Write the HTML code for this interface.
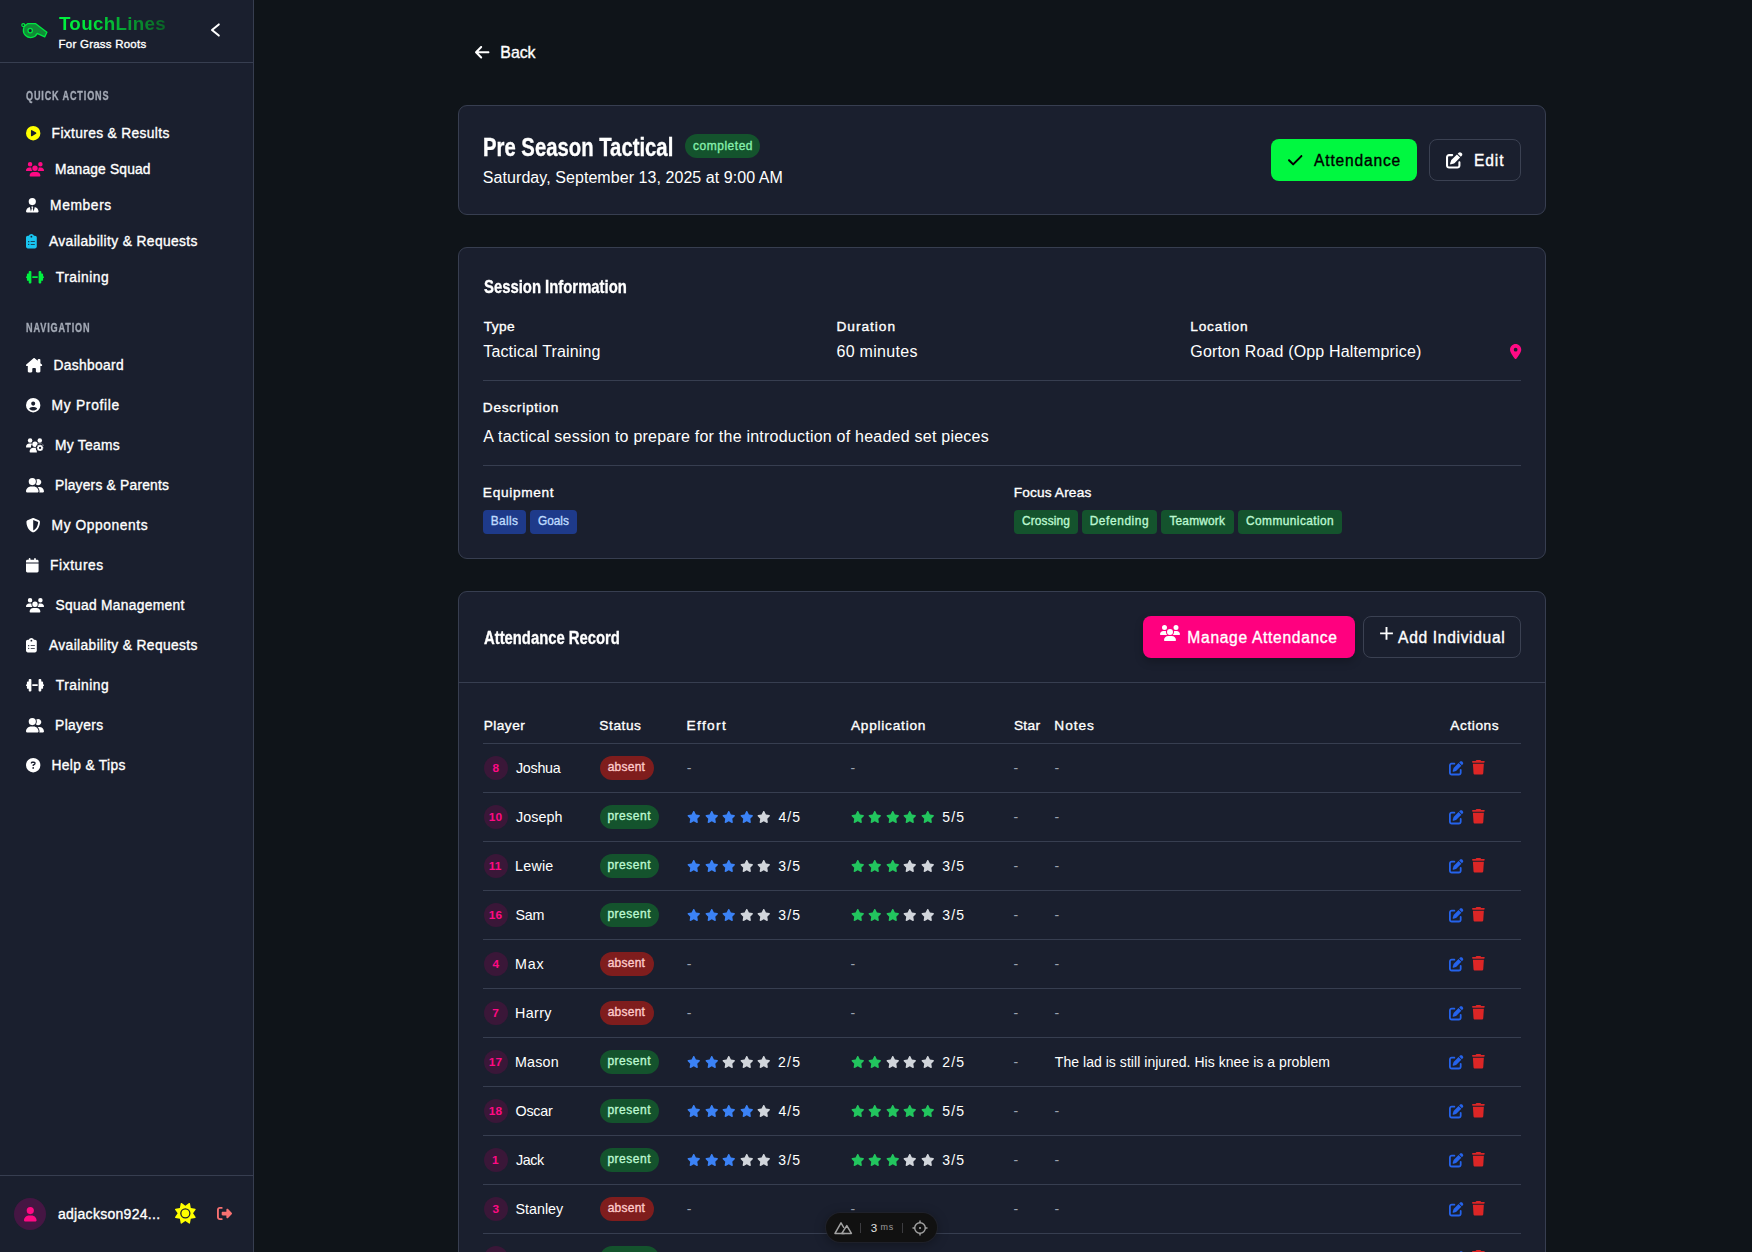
<!DOCTYPE html>
<html lang="en"><head><meta charset="utf-8"><title>TouchLines - Pre Season Tactical</title>
<style>
*{box-sizing:border-box;margin:0;padding:0}
html,body{width:1752px;height:1252px;overflow:hidden;background:#0f1419;color:#fff;font-family:"Liberation Sans",sans-serif;font-size:16px}
svg.i{position:absolute;display:block;overflow:visible}
.t{position:absolute;white-space:nowrap;font-weight:normal;display:block;text-decoration:none}
.hd{-webkit-text-stroke:.35px currentColor}
a{color:inherit;text-decoration:none}
.sb{position:absolute;left:0;top:0;width:254px;height:1252px;background:#1a1f2e;border-right:1px solid #373e50}
.sbh{position:absolute;left:0;top:0;width:253px;height:63px;border-bottom:1px solid #373e50}
.grad{background:linear-gradient(90deg,#00f23f 0%,#00e23a 30%,#07a032 62%,#0a5f25 100%);-webkit-background-clip:text;background-clip:text;color:transparent;padding-right:2px}
.sbf{position:absolute;left:0;top:1175px;width:253px;height:77px;border-top:1px solid #373e50}
.sbf>*{margin-top:-1176px}
.av{position:absolute;left:14px;top:1198px;width:32px;height:32px;border-radius:50%;background:#451643}
.main{position:absolute;left:254px;top:0;width:1498px;height:1252px;overflow:hidden}
.card{position:absolute;left:204px;width:1088px;background:#1a1f2e;border:1px solid #373e50;border-radius:9px}
.c1{top:105px;height:110px}
.c2{top:247px;height:312px}
.c3{top:591px;height:700px}
.c3h{position:absolute;left:0;top:0;width:1086px;height:91px;border-bottom:1px solid #373e50}
.pill{position:absolute;height:24px;border-radius:12px}
.done{background:#14532d}
.btn{position:absolute;height:42px;border-radius:8px}
.att{background:#00f840}
.ol{border:1px solid #3b4152}
.man{background:#ff007f;box-shadow:0 4px 8px rgba(0,0,0,.22)}
.hr{position:absolute;left:24px;width:1038px;height:1px;background:#373e50}
.tag{position:absolute;height:24px;border-radius:4px}
.bl{background:#1e3a8a}
.gr{background:#14532d}
.row{position:absolute;left:24px;width:1038px;height:49px;border-bottom:1px solid #373e50}
.num{position:absolute;width:24px;height:24px;border-radius:50%;background:#3a1738}
.st{position:absolute;height:24px;border-radius:12px}
.absent{background:#7f1d1d}
.present{background:#14532d}
.dev{position:absolute;left:826px;top:1213px;width:111px;height:29px;border-radius:15px;background:#111;box-shadow:0 0 0 1px rgba(40,40,46,.5),0 2px 12px rgba(0,0,0,.35)}
.sep{position:absolute;top:10px;width:1px;height:10px;background:#3c3c40}
.md{-webkit-text-stroke:.35px currentColor}
</style></head>
<body>
<aside class="sb"><div class="sbh">
<svg class="i" style="left:20.00px;top:20.00px;" width="30" height="20" viewBox="20 20 30 20"><path d="M37.100 33.400A7.200 7.200 0 1 1 27.200 24L27.800 23.700H35.700L46.900 32.300L44.700 36.900Z" fill="#118a37" stroke="#00e640" stroke-width="1.300" stroke-linejoin="round"/><circle cx="23.300" cy="25.100" r="1.500" fill="none" stroke="#00e640" stroke-width="1.200"/><circle cx="30.200" cy="30.600" r="2.200" fill="#1a1f2e" stroke="#00e640" stroke-width="1.300"/></svg>
<span class="t grad" style="top:11.00px;font-size:18.8px;line-height:25px;font-weight:bold;letter-spacing:0.298px;left:58.99px;">TouchLines</span>
<span class="t md" style="top:37.00px;font-size:11.5px;line-height:14px;letter-spacing:0.229px;left:58.61px;">For Grass Roots</span>
<svg class="i" style="left:206.00px;top:20.00px;" width="18" height="20" viewBox="206 20 18 20"><path d="M218.800 24.400L212 30L218.800 35.600" fill="none" stroke="#fff" stroke-width="2" stroke-linecap="round" stroke-linejoin="round"/></svg>
</div>
<span class="t hd" style="top:87.00px;font-size:12.9px;line-height:17px;font-weight:bold;color:#a3a9b5;left:26.28px;transform:scaleX(0.7051);transform-origin:0 50%;letter-spacing:1.2px;">QUICK ACTIONS</span>
<nav>
<a class="ni"><svg class="i" style="left:25.80px;top:125.60px;" width="14.40" height="14.4" viewBox="0 0 512 512" fill="#ffff00"><path d="M0 256a256 256 0 1 1 512 0A256 256 0 1 1 0 256zM188.300 147.100c-7.600 4.200-12.300 12.300-12.300 20.900V344c0 8.700 4.700 16.700 12.300 20.900s16.800 4.100 24.300-.5l144-88c7.100-4.400 11.500-12.100 11.500-20.500s-4.400-16.100-11.500-20.500l-144-88c-7.400-4.500-16.700-4.700-24.300-.5z"/></svg><span class="t md" style="top:125.00px;font-size:13.8px;line-height:17px;letter-spacing:0.340px;left:51.62px;">Fixtures &amp; Results</span></a>
<a class="ni"><svg class="i" style="left:25.80px;top:161.60px;" width="18.00" height="14.4" viewBox="0 0 640 512" fill="#ff0a84"><path d="M144 0a80 80 0 1 1 0 160A80 80 0 1 1 144 0zM512 0a80 80 0 1 1 0 160A80 80 0 1 1 512 0zM0 298.700C0 239.800 47.800 192 106.700 192h42.700c15.900 0 31 3.500 44.600 9.700c-1.300 7.200-1.900 14.700-1.900 22.300c0 38.200 16.800 72.500 43.300 96c-.2 0-.4 0-.7 0H21.300C9.600 320 0 310.400 0 298.700zM405.300 320c-.2 0-.4 0-.7 0c26.600-23.500 43.300-57.800 43.300-96c0-7.600-.7-15-1.900-22.300c13.600-6.300 28.700-9.700 44.600-9.700h42.700C592.200 192 640 239.800 640 298.700c0 11.800-9.600 21.300-21.300 21.300H405.300zM224 224a96 96 0 1 1 192 0 96 96 0 1 1 -192 0zM128 485.300C128 411.700 187.700 352 261.300 352H378.700C452.300 352 512 411.700 512 485.300c0 14.700-11.900 26.700-26.700 26.700H154.700c-14.700 0-26.700-11.900-26.700-26.700z"/></svg><span class="t md" style="top:161.00px;font-size:13.8px;line-height:17px;letter-spacing:0.175px;left:55.02px;">Manage Squad</span></a>
<a class="ni"><svg class="i" style="left:25.80px;top:197.60px;" width="12.60" height="14.4" viewBox="0 0 448 512" fill="#fff"><path d="M96 128a128 128 0 1 0 256 0A128 128 0 1 0 96 128zm94.500 200.200l18.600 31L175.800 483.100l-36-146.900c-2-8.100-9.800-13.400-17.900-11.300C51.900 342.400 0 405.800 0 481.300c0 17 13.800 30.700 30.700 30.700H162.500c0 0 0 0 .1 0H168 280h5.500c0 0 0 0 .1 0H417.300c17 0 30.700-13.800 30.700-30.700c0-75.500-51.900-138.900-121.900-156.400c-8.100-2-15.900 3.300-17.900 11.300l-36 146.900L238.900 359.200l18.600-31c6.400-10.700-1.300-24.200-13.700-24.200H224 204.300c-12.400 0-20.100 13.600-13.700 24.200z"/></svg><span class="t md" style="top:197.00px;font-size:13.8px;line-height:17px;letter-spacing:0.622px;left:50.02px;">Members</span></a>
<a class="ni"><svg class="i" style="left:25.80px;top:233.60px;" width="10.80" height="14.4" viewBox="0 0 384 512" fill="#19c5f0"><path d="M192 0c-41.800 0-77.400 26.700-90.500 64H64C28.700 64 0 92.700 0 128V448c0 35.300 28.700 64 64 64H320c35.300 0 64-28.700 64-64V128c0-35.300-28.700-64-64-64H282.500C269.400 26.700 233.800 0 192 0zm0 64a32 32 0 1 1 0 64 32 32 0 1 1 0-64zM72 272a24 24 0 1 1 48 0 24 24 0 1 1 -48 0zm104-16H304c8.800 0 16 7.200 16 16s-7.200 16-16 16H176c-8.800 0-16-7.200-16-16s7.200-16 16-16zM72 368a24 24 0 1 1 48 0 24 24 0 1 1 -48 0zm88 0c0-8.800 7.200-16 16-16H304c8.800 0 16 7.200 16 16s-7.200 16-16 16H176c-8.800 0-16-7.200-16-16z"/></svg><span class="t md" style="top:233.00px;font-size:13.8px;line-height:17px;letter-spacing:0.381px;left:48.97px;">Availability &amp; Requests</span></a>
<a class="ni"><svg class="i" style="left:25.80px;top:269.60px;" width="18.00" height="14.4" viewBox="0 0 640 512" fill="#00f040"><path d="M96 64c0-17.700 14.300-32 32-32h32c17.700 0 32 14.300 32 32V224v64V448c0 17.700-14.300 32-32 32H128c-17.700 0-32-14.300-32-32V384H64c-17.700 0-32-14.300-32-32V288c-17.700 0-32-14.300-32-32s14.300-32 32-32V160c0-17.700 14.300-32 32-32H96V64zm448 0v64h32c17.700 0 32 14.300 32 32v64c17.700 0 32 14.300 32 32s-14.300 32-32 32v64c0 17.700-14.300 32-32 32H544v64c0 17.700-14.300 32-32 32H480c-17.700 0-32-14.300-32-32V288 224 64c0-17.700 14.300-32 32-32h32c17.700 0 32 14.300 32 32zM416 224v64H224V224H416z"/></svg><span class="t md" style="top:269.00px;font-size:13.8px;line-height:17px;letter-spacing:0.508px;left:55.84px;">Training</span></a>
</nav>
<span class="t hd" style="top:319.00px;font-size:12.9px;line-height:17px;font-weight:bold;color:#a3a9b5;left:26.24px;transform:scaleX(0.7079);transform-origin:0 50%;letter-spacing:1.2px;">NAVIGATION</span>
<nav>
<a class="ni"><svg class="i" style="left:25.80px;top:357.60px;" width="16.20" height="14.4" viewBox="0 0 576 512" fill="#fff"><path d="M543.800 287.600c17 0 32-14 32-32.100c1-9-3-17-11-24L512 185V64c0-17.700-14.300-32-32-32H448c-17.700 0-32 14.300-32 32v36.700L309.500 7c-6-5-14-7-21-7s-15 1-22 8L10 231.500c-7 7-10 15-10 24c0 18 14 32.100 32 32.100h32v69.700c-.1 .9-.1 1.800-.1 2.800V472c0 22.100 17.900 40 40 40h16c1.200 0 2.400-.1 3.600-.2c1.500 .1 3 .2 4.500 .2H160h24c22.100 0 40-17.900 40-40V448 384c0-17.700 14.300-32 32-32h64c17.700 0 32 14.300 32 32v64 24c0 22.100 17.900 40 40 40h24 32.500c1.400 0 2.800 0 4.200-.1c1.100 .1 2.200 .1 3.300 .1h16c22.100 0 40-17.900 40-40V455.800c.3-2.600 .5-5.400 .5-8.100l-.7-160.200h32z"/></svg><span class="t md" style="top:357.00px;font-size:13.8px;line-height:17px;letter-spacing:0.353px;left:53.42px;">Dashboard</span></a>
<a class="ni"><svg class="i" style="left:25.80px;top:397.60px;" width="14.40" height="14.4" viewBox="0 0 512 512" fill="#fff"><path d="M399 384.200C376.900 345.800 335.400 320 288 320H224c-47.400 0-88.900 25.800-111 64.200c35.200 39.200 86.200 63.800 143 63.800s107.800-24.700 143-63.800zM0 256a256 256 0 1 1 512 0A256 256 0 1 1 0 256zm256 16a72 72 0 1 0 0-144 72 72 0 1 0 0 144z"/></svg><span class="t md" style="top:397.00px;font-size:13.8px;line-height:17px;letter-spacing:0.700px;left:51.62px;">My Profile</span></a>
<a class="ni"><svg class="i" style="left:25.80px;top:437.60px;" width="18" height="14.4" viewBox="0 0 18 14.4"><g fill="#fff"><circle cx="4.100" cy="2.400" r="2.250"/><circle cx="13.800" cy="2.400" r="2.250"/><path d="M0 9c0-2 1.400-3.400 3.300-3.400h1.400c.5 0 1 .1 1.400.3-.9 1-1.300 2.200-1 3.700H.7C.3 9.600 0 9.400 0 9z"/><circle cx="9" cy="6.300" r="2.700"/><path d="M3.600 13.700c0-2.200 1.700-3.900 3.900-3.900h3c.6 0 1.200.1 1.700.4-.9.900-1.400 2-1.400 3.300 0 .3 0 .6.1.9H4.300c-.4 0-.7-.3-.7-.7z"/><path d="M12.100 5.900c.3-.2.800-.3 1.200-.3h1.400c1.900 0 3.300 1.400 3.300 3.400 0 0 0 .1 0 .1-.7-.5-1.600-.8-2.500-.8-1 0-1.900.3-2.600.9.100-.6.100-1.200-.1-1.800-.1-.5-.4-1-.7-1.500z"/><g transform="translate(-0.9,-0.8)"><circle cx="14.95" cy="10.70" r="4.300" fill="#1a1f2e"/><path fill-rule="evenodd" d="M18.17 9.98L18.17 11.42L17.22 11.63L17.21 11.64L17.74 12.47L16.72 13.49L15.89 12.96L15.88 12.97L15.67 13.92L14.23 13.92L14.02 12.97L14.01 12.96L13.18 13.49L12.16 12.47L12.69 11.64L12.68 11.63L11.73 11.42L11.73 9.98L12.68 9.77L12.69 9.76L12.16 8.93L13.18 7.91L14.01 8.44L14.02 8.43L14.23 7.48L15.67 7.48L15.88 8.43L15.89 8.44L16.72 7.91L17.74 8.93L17.21 9.76L17.22 9.77ZM13.80 10.70a1.150 1.150 0 1 0 2.300 0a1.150 1.150 0 1 0 -2.300 0Z"/></g></g></svg><span class="t md" style="top:437.00px;font-size:13.8px;line-height:17px;letter-spacing:0.287px;left:55.02px;">My Teams</span></a>
<a class="ni"><svg class="i" style="left:25.80px;top:477.60px;" width="18.00" height="14.4" viewBox="0 0 640 512" fill="#fff"><path d="M96 128a128 128 0 1 1 256 0A128 128 0 1 1 96 128zM0 482.300C0 383.800 79.800 304 178.300 304h91.400C368.200 304 448 383.800 448 482.300c0 16.400-13.300 29.700-29.700 29.700H29.700C13.300 512 0 498.700 0 482.300zM609.300 512H471.400c5.400-9.400 8.600-20.300 8.600-32v-8c0-60.700-27.100-115.200-69.800-151.800c2.400-.1 4.700-.2 7.100-.2h61.400C567.800 320 640 392.200 640 481.300c0 17-13.800 30.700-30.700 30.700zM432 256c-31 0-59-12.600-79.300-32.900C372.400 196.500 384 163.600 384 128c0-26.800-6.600-52.100-18.300-74.300C384.300 40.100 407.200 32 432 32c61.900 0 112 50.100 112 112s-50.100 112-112 112z"/></svg><span class="t md" style="top:477.00px;font-size:13.8px;line-height:17px;letter-spacing:0.218px;left:55.02px;">Players &amp; Parents</span></a>
<a class="ni"><svg class="i" style="left:25.80px;top:517.60px;" width="14.40" height="14.4" viewBox="0 0 512 512" fill="#fff"><path d="M256 0c4.600 0 9.200 1 13.400 2.900L457.700 82.800c22 9.300 38.400 31 38.300 57.200c-.5 99.200-41.300 280.700-213.600 363.200c-16.700 8-36.100 8-52.800 0C57.300 420.700 16.500 239.200 16 140c-.1-26.200 16.300-47.900 38.300-57.200L242.700 2.900C246.800 1 251.400 0 256 0zm0 66.800V444.800C394 378 431.100 230.100 432 141.400L256 66.800l0 0z"/></svg><span class="t md" style="top:517.00px;font-size:13.8px;line-height:17px;letter-spacing:0.572px;left:51.62px;">My Opponents</span></a>
<a class="ni"><svg class="i" style="left:25.80px;top:557.60px;" width="12.60" height="14.4" viewBox="0 0 448 512" fill="#fff"><path d="M96 32V64H48C21.500 64 0 85.500 0 112v48H448V112c0-26.500-21.500-48-48-48H352V32c0-17.700-14.300-32-32-32s-32 14.300-32 32V64H160V32c0-17.700-14.300-32-32-32S96 14.300 96 32zM448 192H0V464c0 26.500 21.500 48 48 48H400c26.500 0 48-21.500 48-48V192z"/></svg><span class="t md" style="top:557.00px;font-size:13.8px;line-height:17px;letter-spacing:0.593px;left:50.02px;">Fixtures</span></a>
<a class="ni"><svg class="i" style="left:25.80px;top:597.60px;" width="18.00" height="14.4" viewBox="0 0 640 512" fill="#fff"><path d="M144 0a80 80 0 1 1 0 160A80 80 0 1 1 144 0zM512 0a80 80 0 1 1 0 160A80 80 0 1 1 512 0zM0 298.700C0 239.800 47.800 192 106.700 192h42.700c15.900 0 31 3.500 44.600 9.700c-1.300 7.200-1.900 14.700-1.900 22.300c0 38.200 16.800 72.500 43.300 96c-.2 0-.4 0-.7 0H21.300C9.600 320 0 310.400 0 298.700zM405.300 320c-.2 0-.4 0-.7 0c26.600-23.500 43.300-57.800 43.300-96c0-7.600-.7-15-1.900-22.300c13.600-6.300 28.700-9.700 44.600-9.700h42.700C592.200 192 640 239.800 640 298.700c0 11.800-9.600 21.300-21.300 21.300H405.300zM224 224a96 96 0 1 1 192 0 96 96 0 1 1 -192 0zM128 485.300C128 411.700 187.700 352 261.300 352H378.700C452.300 352 512 411.700 512 485.300c0 14.700-11.900 26.700-26.700 26.700H154.700c-14.700 0-26.700-11.900-26.700-26.700z"/></svg><span class="t md" style="top:597.00px;font-size:13.8px;line-height:17px;letter-spacing:0.297px;left:55.52px;">Squad Management</span></a>
<a class="ni"><svg class="i" style="left:25.80px;top:637.60px;" width="10.80" height="14.4" viewBox="0 0 384 512" fill="#fff"><path d="M192 0c-41.800 0-77.400 26.700-90.500 64H64C28.700 64 0 92.700 0 128V448c0 35.300 28.700 64 64 64H320c35.300 0 64-28.700 64-64V128c0-35.300-28.700-64-64-64H282.500C269.400 26.700 233.800 0 192 0zm0 64a32 32 0 1 1 0 64 32 32 0 1 1 0-64zM72 272a24 24 0 1 1 48 0 24 24 0 1 1 -48 0zm104-16H304c8.800 0 16 7.200 16 16s-7.200 16-16 16H176c-8.800 0-16-7.200-16-16s7.200-16 16-16zM72 368a24 24 0 1 1 48 0 24 24 0 1 1 -48 0zm88 0c0-8.800 7.200-16 16-16H304c8.800 0 16 7.200 16 16s-7.200 16-16 16H176c-8.800 0-16-7.200-16-16z"/></svg><span class="t md" style="top:637.00px;font-size:13.8px;line-height:17px;letter-spacing:0.381px;left:48.97px;">Availability &amp; Requests</span></a>
<a class="ni"><svg class="i" style="left:25.80px;top:677.60px;" width="18.00" height="14.4" viewBox="0 0 640 512" fill="#fff"><path d="M96 64c0-17.700 14.300-32 32-32h32c17.700 0 32 14.300 32 32V224v64V448c0 17.700-14.300 32-32 32H128c-17.700 0-32-14.300-32-32V384H64c-17.700 0-32-14.300-32-32V288c-17.700 0-32-14.300-32-32s14.300-32 32-32V160c0-17.700 14.300-32 32-32H96V64zm448 0v64h32c17.700 0 32 14.300 32 32v64c17.700 0 32 14.300 32 32s-14.300 32-32 32v64c0 17.700-14.300 32-32 32H544v64c0 17.700-14.300 32-32 32H480c-17.700 0-32-14.300-32-32V288 224 64c0-17.700 14.300-32 32-32h32c17.700 0 32 14.300 32 32zM416 224v64H224V224H416z"/></svg><span class="t md" style="top:677.00px;font-size:13.8px;line-height:17px;letter-spacing:0.508px;left:55.84px;">Training</span></a>
<a class="ni"><svg class="i" style="left:25.80px;top:717.60px;" width="18.00" height="14.4" viewBox="0 0 640 512" fill="#fff"><path d="M96 128a128 128 0 1 1 256 0A128 128 0 1 1 96 128zM0 482.300C0 383.800 79.800 304 178.300 304h91.400C368.200 304 448 383.800 448 482.300c0 16.400-13.300 29.700-29.700 29.700H29.700C13.300 512 0 498.700 0 482.300zM609.300 512H471.400c5.400-9.400 8.600-20.300 8.600-32v-8c0-60.700-27.100-115.200-69.800-151.800c2.400-.1 4.700-.2 7.100-.2h61.400C567.800 320 640 392.200 640 481.300c0 17-13.800 30.700-30.700 30.700zM432 256c-31 0-59-12.600-79.300-32.900C372.400 196.500 384 163.600 384 128c0-26.800-6.600-52.100-18.300-74.300C384.300 40.100 407.200 32 432 32c61.900 0 112 50.100 112 112s-50.100 112-112 112z"/></svg><span class="t md" style="top:717.00px;font-size:13.8px;line-height:17px;letter-spacing:0.336px;left:55.12px;">Players</span></a>
<a class="ni"><svg class="i" style="left:25.80px;top:757.60px;" width="14.40" height="14.4" viewBox="0 0 512 512" fill="#fff"><path d="M256 512A256 256 0 1 0 256 0a256 256 0 1 0 0 512zM169.800 165.300c7.900-22.300 29.100-37.300 52.800-37.300h58.300c34.900 0 63.100 28.300 63.100 63.100c0 22.600-12.100 43.500-31.700 54.800L280 264.400c-.2 13-10.900 23.600-24 23.600c-13.300 0-24-10.700-24-24V250.500c0-8.600 4.600-16.500 12.100-20.800l44.300-25.400c4.700-2.700 7.600-7.700 7.600-13.100c0-8.400-6.800-15.100-15.100-15.100H222.600c-3.400 0-6.400 2.100-7.500 5.300l-.4 1.200c-4.400 12.500-18.200 19-30.600 14.600s-19-18.200-14.600-30.600l.4-1.200zM224 352a32 32 0 1 1 64 0 32 32 0 1 1 -64 0z"/></svg><span class="t md" style="top:757.00px;font-size:13.8px;line-height:17px;letter-spacing:0.337px;left:51.52px;">Help &amp; Tips</span></a>
</nav>
<div class="sbf"><div class="av"></div>
<svg class="i" style="left:23.80px;top:1206.80px;" width="12.60" height="14.4" viewBox="0 0 448 512" fill="#ff0a84"><path d="M224 256A128 128 0 1 0 224 0a128 128 0 1 0 0 256zm-45.700 48C79.800 304 0 383.800 0 482.300C0 498.700 13.300 512 29.700 512H418.300c16.400 0 29.700-13.300 29.700-29.700C448 383.800 368.200 304 269.700 304H178.300z"/></svg>
<span class="t md" style="top:1205.00px;font-size:14.0px;line-height:18px;letter-spacing:0.292px;left:57.96px;">adjackson924...</span>
<svg class="i" style="left:174.70px;top:1202.95px;" width="20.70" height="20.7" viewBox="0 0 512 512" fill="#ffff00"><path d="M361.500 1.200c5 2.100 8.600 6.600 9.600 11.900L391 121l107.900 19.800c5.300 1 9.800 4.600 11.900 9.600s1.500 10.700-1.600 15.200L446.900 256l62.300 90.300c3.100 4.500 3.700 10.200 1.600 15.200s-6.600 8.600-11.900 9.600L391 391 371.100 498.900c-1 5.300-4.600 9.800-9.600 11.900s-10.700 1.500-15.200-1.600L256 446.900l-90.300 62.300c-4.500 3.100-10.200 3.700-15.200 1.600s-8.600-6.600-9.600-11.900L121 391 13.100 371.100c-5.300-1-9.800-4.600-11.900-9.600s-1.500-10.700 1.600-15.200L65.100 256 2.800 165.700c-3.100-4.500-3.700-10.200-1.600-15.200s6.600-8.600 11.900-9.600L121 121 140.900 13.100c1-5.300 4.600-9.800 9.600-11.900s10.700-1.500 15.200 1.600L256 65.100 346.300 2.800c4.500-3.100 10.200-3.700 15.200-1.600zM160 256a96 96 0 1 1 192 0 96 96 0 1 1 -192 0zm224 0a128 128 0 1 0 -256 0 128 128 0 1 0 256 0z"/></svg>
<svg class="i" style="left:216.70px;top:1206.40px;" width="15.00" height="15" viewBox="0 0 512 512" fill="#f87171"><path d="M377.900 105.900L500.700 228.700c7.200 7.200 11.300 17.100 11.300 27.300s-4.100 20.100-11.300 27.300L377.900 406.100c-6.400 6.400-15 9.900-24 9.900c-18.700 0-33.900-15.200-33.900-33.900l0-62.100-128 0c-17.700 0-32-14.300-32-32l0-64c0-17.700 14.300-32 32-32l128 0 0-62.100c0-18.700 15.200-33.900 33.900-33.900c9 0 17.600 3.600 24 9.900zM160 96L96 96c-17.700 0-32 14.300-32 32l0 256c0 17.700 14.300 32 32 32l64 0c17.700 0 32 14.300 32 32s-14.300 32-32 32l-64 0c-53 0-96-43-96-96L0 128C0 75 43 32 96 32l64 0c17.700 0 32 14.300 32 32s-14.300 32-32 32z"/></svg>
</div></aside>
<main class="main">
<a class="back"><svg class="i" style="left:220.80px;top:43.95px;" width="14.44" height="16.5" viewBox="0 0 448 512" fill="#fff"><path d="M9.400 233.400c-12.500 12.500-12.500 32.800 0 45.300l160 160c12.500 12.500 32.800 12.500 45.300 0s12.500-32.800 0-45.300L109.200 288 416 288c17.700 0 32-14.300 32-32s-14.300-32-32-32l-306.700 0L214.600 118.600c12.500-12.500 12.500-32.800 0-45.300s-32.800-12.500-45.300 0l-160 160z"/></svg><span class="t md" style="top:42.00px;font-size:15.9px;line-height:21px;letter-spacing:-0.049px;left:246.35px;">Back</span></a>
<section class="card c1">
<h1 class="t hd" style="top:25.00px;font-size:26.0px;line-height:32px;font-weight:bold;left:23.99px;transform:scaleX(0.7807);transform-origin:0 50%;">Pre Season Tactical</h1>
<span class="pill done" style="left:226px;top:28px;width:75px"></span><span class="t md" style="top:32.00px;font-size:12px;line-height:16px;color:#86efac;letter-spacing:0.526px;left:233.94px;">completed</span>
<p class="t" style="top:61.00px;font-size:16px;line-height:21px;letter-spacing:0.062px;left:23.87px;">Saturday, September 13, 2025 at 9:00 AM</p>
<div class="btn att" style="left:812px;top:33px;width:146px"></div><svg class="i" style="left:828.80px;top:45.75px;" width="14.44" height="16.5" viewBox="0 0 448 512" fill="#000"><path d="M438.600 105.400c12.500 12.500 12.500 32.800 0 45.300l-256 256c-12.500 12.500-32.800 12.500-45.300 0l-128-128c-12.500-12.500-12.500-32.800 0-45.300s32.800-12.500 45.300 0L160 338.700 393.400 105.400c12.500-12.500 32.800-12.500 45.300 0z"/></svg><span class="t md" style="top:44.00px;font-size:15.6px;line-height:21px;color:#000;letter-spacing:0.802px;left:855.12px;">Attendance</span>
<div class="btn ol" style="left:970px;top:33px;width:92px"></div><svg class="i" style="left:986.90px;top:45.95px;" width="16.50" height="16.5" viewBox="0 0 512 512" fill="#fff"><path d="M471.600 21.700c-21.900-21.900-57.300-21.900-79.200 0L362.300 51.700l97.900 97.900 30.100-30.100c21.900-21.900 21.900-57.300 0-79.200L471.600 21.700zm-299.200 220c-6.100 6.100-10.800 13.600-13.500 21.900l-29.600 88.800c-2.900 8.600-.6 18.100 5.800 24.600s15.900 8.700 24.600 5.800l88.800-29.600c8.200-2.700 15.700-7.400 21.900-13.500L437.700 172.300 339.700 74.300 172.400 241.700zM96 64C43 64 0 107 0 160V416c0 53 43 96 96 96H352c53 0 96-43 96-96V320c0-17.700-14.300-32-32-32s-32 14.300-32 32v96c0 17.700-14.300 32-32 32H96c-17.700 0-32-14.300-32-32V160c0-17.700 14.300-32 32-32h96c17.700 0 32-14.300 32-32s-14.300-32-32-32H96z"/></svg><span class="t md" style="top:44.00px;font-size:15.6px;line-height:21px;letter-spacing:0.873px;left:1014.97px;">Edit</span>
</section>
<section class="card c2">
<h2 class="t hd" style="top:26.00px;font-size:19.0px;line-height:25px;font-weight:bold;left:24.82px;transform:scaleX(0.7821);transform-origin:0 50%;">Session Information</h2>
<span class="t md" style="top:70.00px;font-size:13.7px;line-height:17px;letter-spacing:0.410px;left:24.64px;">Type</span>
<span class="t md" style="top:70.00px;font-size:13.7px;line-height:17px;letter-spacing:0.966px;left:377.53px;">Duration</span>
<span class="t md" style="top:70.00px;font-size:13.7px;line-height:17px;letter-spacing:0.781px;left:731.33px;">Location</span>
<span class="t" style="top:93.00px;font-size:16px;line-height:21px;letter-spacing:0.154px;left:24.24px;">Tactical Training</span>
<span class="t" style="top:93.00px;font-size:16px;line-height:21px;letter-spacing:0.292px;left:377.49px;">60 minutes</span>
<span class="t" style="top:93.00px;font-size:16px;line-height:21px;letter-spacing:0.151px;left:731.30px;">Gorton Road (Opp Haltemprice)</span>
<svg class="i" style="left:1051.40px;top:96.40px;" width="11.25" height="15" viewBox="0 0 384 512" fill="#ff0a84"><path d="M215.700 499.200C267 435 384 279.400 384 192C384 86 298 0 192 0S0 86 0 192c0 87.400 117 243 168.300 307.200c12.300 15.300 35.100 15.300 47.400 0zM192 128a64 64 0 1 1 0 128 64 64 0 1 1 0-128z"/></svg>
<div class="hr" style="top:132px"></div>
<span class="t md" style="top:151.00px;font-size:13.7px;line-height:17px;letter-spacing:0.714px;left:23.83px;">Description</span>
<p class="t" style="top:178.00px;font-size:16px;line-height:21px;letter-spacing:0.230px;left:24.37px;">A tactical session to prepare for the introduction of headed set pieces</p>
<div class="hr" style="top:217px"></div>
<span class="t md" style="top:236.00px;font-size:13.7px;line-height:17px;letter-spacing:0.673px;left:23.83px;">Equipment</span>
<span class="t md" style="top:236.00px;font-size:13.7px;line-height:17px;letter-spacing:0.154px;left:554.63px;">Focus Areas</span>
<span class="tag bl" style="left:24.0px;top:262px;width:43.0px"></span><span class="t md" style="top:265.00px;font-size:11.9px;line-height:16px;color:#bfdbfe;letter-spacing:0.356px;left:31.67px;">Balls</span><span class="tag bl" style="left:71.0px;top:262px;width:47.0px"></span><span class="t md" style="top:265.00px;font-size:11.9px;line-height:16px;color:#bfdbfe;letter-spacing:-0.059px;left:79.05px;">Goals</span>
<span class="tag gr" style="left:555.0px;top:262px;width:63.7px"></span><span class="t md" style="top:265.00px;font-size:11.9px;line-height:16px;color:#bbf7d0;letter-spacing:0.121px;left:563.05px;">Crossing</span><span class="tag gr" style="left:623.0px;top:262px;width:74.6px"></span><span class="t md" style="top:265.00px;font-size:11.9px;line-height:16px;color:#bbf7d0;letter-spacing:0.603px;left:630.67px;">Defending</span><span class="tag gr" style="left:702.0px;top:262px;width:72.6px"></span><span class="t md" style="top:265.00px;font-size:11.9px;line-height:16px;color:#bbf7d0;letter-spacing:0.195px;left:710.38px;">Teamwork</span><span class="tag gr" style="left:779.0px;top:262px;width:103.6px"></span><span class="t md" style="top:265.00px;font-size:11.9px;line-height:16px;color:#bbf7d0;letter-spacing:0.422px;left:787.05px;">Communication</span>
</section>
<section class="card c3"><div class="c3h"></div>
<h2 class="t hd" style="top:33.00px;font-size:19.0px;line-height:25px;font-weight:bold;left:24.88px;transform:scaleX(0.7798);transform-origin:0 50%;">Attendance Record</h2>
<div class="btn man" style="left:684px;top:24px;width:212px"></div><svg class="i" style="left:701.00px;top:33.20px;" width="20.00" height="16" viewBox="0 0 640 512" fill="#fff"><path d="M144 0a80 80 0 1 1 0 160A80 80 0 1 1 144 0zM512 0a80 80 0 1 1 0 160A80 80 0 1 1 512 0zM0 298.700C0 239.800 47.800 192 106.700 192h42.700c15.900 0 31 3.500 44.600 9.700c-1.300 7.200-1.900 14.700-1.900 22.300c0 38.200 16.800 72.500 43.300 96c-.2 0-.4 0-.7 0H21.300C9.600 320 0 310.400 0 298.700zM405.300 320c-.2 0-.4 0-.7 0c26.600-23.500 43.300-57.800 43.300-96c0-7.600-.7-15-1.900-22.300c13.600-6.300 28.700-9.700 44.600-9.700h42.700C592.200 192 640 239.800 640 298.700c0 11.800-9.600 21.300-21.300 21.300H405.300zM224 224a96 96 0 1 1 192 0 96 96 0 1 1 -192 0zM128 485.300C128 411.700 187.700 352 261.300 352H378.700C452.300 352 512 411.700 512 485.300c0 14.700-11.900 26.700-26.700 26.700H154.700c-14.700 0-26.700-11.900-26.700-26.700z"/></svg><span class="t md" style="top:35.00px;font-size:15.6px;line-height:21px;letter-spacing:0.684px;left:728.37px;">Manage Attendance</span>
<div class="btn ol" style="left:904px;top:24px;width:158px"></div><svg class="i" style="left:920.00px;top:34.00px;" width="15" height="15" viewBox="1379 626 15 15"><path d="M1386.500 627v12.800M1380.100 633.400h12.800" stroke="#fff" stroke-width="1.900" fill="none"/></svg><span class="t md" style="top:35.00px;font-size:15.6px;line-height:21px;letter-spacing:0.662px;left:939.12px;">Add Individual</span>
<span class="t md" style="top:125.00px;font-size:13.7px;line-height:17px;letter-spacing:0.471px;left:24.63px;">Player</span>
<span class="t md" style="top:125.00px;font-size:13.7px;line-height:17px;letter-spacing:0.561px;left:140.33px;">Status</span>
<span class="t md" style="top:125.00px;font-size:13.7px;line-height:17px;letter-spacing:1.371px;left:227.53px;">Effort</span>
<span class="t md" style="top:125.00px;font-size:13.7px;line-height:17px;letter-spacing:0.755px;left:391.92px;">Application</span>
<span class="t md" style="top:125.00px;font-size:13.7px;line-height:17px;letter-spacing:0.313px;left:554.93px;">Star</span>
<span class="t md" style="top:125.00px;font-size:13.7px;line-height:17px;letter-spacing:0.938px;left:595.33px;">Notes</span>
<span class="t md" style="top:125.00px;font-size:13.7px;line-height:17px;letter-spacing:0.572px;left:991.32px;">Actions</span>
<div class="hr" style="top:151px"></div>
<div class="row" style="top:152px">
<span class="num" style="left:1px;top:12px"></span>
<span class="t" style="top:16.00px;font-size:11.8px;line-height:16px;font-weight:bold;color:#ff0a84;left:9.43px;">8</span>
<span class="t" style="top:15.00px;font-size:14.3px;line-height:18px;letter-spacing:-0.277px;left:32.98px;">Joshua</span>
<span class="st absent" style="left:117px;top:12px;width:54px"></span><span class="t md" style="top:15.00px;font-size:12.0px;line-height:16px;color:#fecaca;letter-spacing:0.253px;left:124.64px;">absent</span>
<span class="t" style="top:15.00px;font-size:14px;line-height:18px;color:#9ca3af;left:203.78px;">-</span><span class="t" style="top:15.00px;font-size:14px;line-height:18px;color:#9ca3af;left:367.38px;">-</span>
<span class="t" style="top:15.00px;font-size:14px;line-height:18px;color:#9ca3af;left:530.58px;">-</span>
<span class="t" style="top:15.00px;font-size:14px;line-height:18px;color:#9ca3af;left:571.48px;">-</span>
<svg class="i" style="left:966.30px;top:16.60px;" width="14.40" height="14.4" viewBox="0 0 512 512" fill="#2563eb"><path d="M471.600 21.700c-21.900-21.900-57.300-21.900-79.200 0L362.300 51.700l97.900 97.900 30.100-30.100c21.900-21.900 21.900-57.300 0-79.200L471.600 21.700zm-299.200 220c-6.100 6.100-10.800 13.600-13.500 21.900l-29.600 88.800c-2.900 8.600-.6 18.100 5.800 24.600s15.900 8.700 24.600 5.800l88.800-29.600c8.200-2.700 15.700-7.400 21.900-13.500L437.700 172.300 339.700 74.300 172.400 241.700zM96 64C43 64 0 107 0 160V416c0 53 43 96 96 96H352c53 0 96-43 96-96V320c0-17.700-14.300-32-32-32s-32 14.300-32 32v96c0 17.700-14.300 32-32 32H96c-17.700 0-32-14.300-32-32V160c0-17.700 14.300-32 32-32h96c17.700 0 32-14.300 32-32s-14.300-32-32-32H96z"/></svg><svg class="i" style="left:988.70px;top:16.30px;" width="12.78" height="14.6" viewBox="0 0 448 512" fill="#dc2626"><path d="M135.200 17.700L128 32H32C14.300 32 0 46.300 0 64S14.300 96 32 96H416c17.700 0 32-14.300 32-32s-14.300-32-32-32H320l-7.200-14.300C307.400 6.800 296.300 0 284.200 0H163.800c-12.100 0-23.200 6.800-28.600 17.700zM416 128H32L53.200 467c1.600 25.300 22.600 45 47.900 45H346.900c25.300 0 46.300-19.700 47.900-45L416 128z"/></svg>
</div>
<div class="row" style="top:201px">
<span class="num" style="left:1px;top:12px"></span>
<span class="t" style="top:16.00px;font-size:11.8px;line-height:16px;font-weight:bold;color:#ff0a84;left:5.86px;">10</span>
<span class="t" style="top:15.00px;font-size:14.3px;line-height:18px;letter-spacing:0.069px;left:32.98px;">Joseph</span>
<span class="st present" style="left:117px;top:12px;width:59px"></span><span class="t md" style="top:15.00px;font-size:12.0px;line-height:16px;color:#bbf7d0;letter-spacing:0.522px;left:124.38px;">present</span>
<svg class="i" style="left:204.10px;top:17.70px;" width="13.50" height="12" viewBox="0 0 576 512" fill="#3b82f6"><path d="M316.900 18C311.600 7 300.400 0 288.100 0s-23.400 7-28.800 18L195 150.300 51.400 171.500c-12 1.800-22 10.200-25.700 21.700s-.7 24.200 7.900 32.700L137.800 329 113.200 474.700c-2 12 3 24.200 12.900 31.300s23 8 33.800 2.300l128.300-68.500 128.300 68.500c10.800 5.700 23.900 4.900 33.800-2.300s14.900-19.300 12.900-31.300L438.500 329 542.700 225.900c8.600-8.500 11.700-21.200 7.900-32.700s-13.700-19.900-25.700-21.700L381.200 150.300 316.900 18z"/></svg>
<svg class="i" style="left:221.60px;top:17.70px;" width="13.50" height="12" viewBox="0 0 576 512" fill="#3b82f6"><path d="M316.900 18C311.600 7 300.400 0 288.100 0s-23.400 7-28.800 18L195 150.300 51.400 171.500c-12 1.800-22 10.200-25.700 21.700s-.7 24.200 7.900 32.700L137.800 329 113.200 474.700c-2 12 3 24.200 12.900 31.300s23 8 33.800 2.300l128.300-68.500 128.300 68.500c10.800 5.700 23.900 4.900 33.800-2.300s14.900-19.300 12.900-31.300L438.500 329 542.700 225.900c8.600-8.500 11.700-21.200 7.900-32.700s-13.700-19.900-25.700-21.700L381.200 150.300 316.900 18z"/></svg>
<svg class="i" style="left:239.10px;top:17.70px;" width="13.50" height="12" viewBox="0 0 576 512" fill="#3b82f6"><path d="M316.900 18C311.600 7 300.400 0 288.100 0s-23.400 7-28.800 18L195 150.300 51.400 171.500c-12 1.800-22 10.200-25.700 21.700s-.7 24.200 7.900 32.700L137.800 329 113.200 474.700c-2 12 3 24.200 12.900 31.300s23 8 33.800 2.300l128.300-68.500 128.300 68.500c10.800 5.700 23.900 4.900 33.800-2.300s14.900-19.300 12.900-31.300L438.500 329 542.700 225.900c8.600-8.500 11.700-21.200 7.900-32.700s-13.700-19.900-25.700-21.700L381.200 150.300 316.900 18z"/></svg>
<svg class="i" style="left:256.60px;top:17.70px;" width="13.50" height="12" viewBox="0 0 576 512" fill="#3b82f6"><path d="M316.900 18C311.600 7 300.400 0 288.100 0s-23.400 7-28.800 18L195 150.300 51.400 171.500c-12 1.800-22 10.200-25.700 21.700s-.7 24.200 7.900 32.700L137.800 329 113.200 474.700c-2 12 3 24.200 12.900 31.300s23 8 33.800 2.300l128.300-68.500 128.300 68.500c10.800 5.700 23.900 4.900 33.800-2.300s14.900-19.300 12.900-31.300L438.500 329 542.700 225.900c8.600-8.500 11.700-21.200 7.900-32.700s-13.700-19.900-25.700-21.700L381.200 150.300 316.900 18z"/></svg>
<svg class="i" style="left:274.10px;top:17.70px;" width="13.50" height="12" viewBox="0 0 576 512" fill="#d1d5db"><path d="M316.900 18C311.600 7 300.400 0 288.100 0s-23.400 7-28.800 18L195 150.300 51.400 171.500c-12 1.800-22 10.200-25.700 21.700s-.7 24.200 7.900 32.700L137.800 329 113.200 474.700c-2 12 3 24.200 12.900 31.300s23 8 33.800 2.300l128.300-68.500 128.300 68.500c10.800 5.700 23.900 4.900 33.800-2.300s14.900-19.300 12.900-31.300L438.500 329 542.700 225.900c8.600-8.500 11.700-21.200 7.900-32.700s-13.700-19.900-25.700-21.700L381.200 150.300 316.900 18z"/></svg>
<span class="t" style="top:15.00px;font-size:14px;line-height:18px;letter-spacing:1.020px;left:295.48px;">4/5</span>
<svg class="i" style="left:367.90px;top:17.70px;" width="13.50" height="12" viewBox="0 0 576 512" fill="#22c55e"><path d="M316.900 18C311.600 7 300.400 0 288.100 0s-23.400 7-28.800 18L195 150.300 51.400 171.500c-12 1.800-22 10.200-25.700 21.700s-.7 24.200 7.900 32.700L137.800 329 113.200 474.700c-2 12 3 24.200 12.900 31.300s23 8 33.800 2.300l128.300-68.500 128.300 68.500c10.800 5.700 23.900 4.900 33.800-2.300s14.900-19.300 12.900-31.300L438.500 329 542.700 225.900c8.600-8.500 11.700-21.200 7.900-32.700s-13.700-19.900-25.700-21.700L381.200 150.300 316.900 18z"/></svg>
<svg class="i" style="left:385.40px;top:17.70px;" width="13.50" height="12" viewBox="0 0 576 512" fill="#22c55e"><path d="M316.900 18C311.600 7 300.400 0 288.100 0s-23.400 7-28.800 18L195 150.300 51.400 171.500c-12 1.800-22 10.200-25.700 21.700s-.7 24.200 7.900 32.700L137.800 329 113.200 474.700c-2 12 3 24.200 12.900 31.300s23 8 33.800 2.300l128.300-68.500 128.300 68.500c10.800 5.700 23.900 4.900 33.800-2.300s14.900-19.300 12.900-31.300L438.500 329 542.700 225.900c8.600-8.500 11.700-21.200 7.900-32.700s-13.700-19.900-25.700-21.700L381.200 150.300 316.900 18z"/></svg>
<svg class="i" style="left:402.90px;top:17.70px;" width="13.50" height="12" viewBox="0 0 576 512" fill="#22c55e"><path d="M316.900 18C311.600 7 300.400 0 288.100 0s-23.400 7-28.800 18L195 150.300 51.400 171.500c-12 1.800-22 10.200-25.700 21.700s-.7 24.200 7.900 32.700L137.800 329 113.200 474.700c-2 12 3 24.200 12.900 31.300s23 8 33.800 2.300l128.300-68.500 128.300 68.500c10.800 5.700 23.900 4.900 33.800-2.300s14.900-19.300 12.900-31.300L438.500 329 542.700 225.900c8.600-8.500 11.700-21.200 7.900-32.700s-13.700-19.900-25.700-21.700L381.200 150.300 316.900 18z"/></svg>
<svg class="i" style="left:420.40px;top:17.70px;" width="13.50" height="12" viewBox="0 0 576 512" fill="#22c55e"><path d="M316.900 18C311.600 7 300.400 0 288.100 0s-23.400 7-28.800 18L195 150.300 51.400 171.500c-12 1.800-22 10.200-25.700 21.700s-.7 24.200 7.900 32.700L137.800 329 113.200 474.700c-2 12 3 24.200 12.900 31.300s23 8 33.800 2.300l128.300-68.500 128.300 68.500c10.800 5.700 23.900 4.900 33.800-2.300s14.900-19.300 12.900-31.300L438.500 329 542.700 225.900c8.600-8.500 11.700-21.200 7.900-32.700s-13.700-19.900-25.700-21.700L381.200 150.300 316.900 18z"/></svg>
<svg class="i" style="left:437.90px;top:17.70px;" width="13.50" height="12" viewBox="0 0 576 512" fill="#22c55e"><path d="M316.900 18C311.600 7 300.400 0 288.100 0s-23.400 7-28.800 18L195 150.300 51.400 171.500c-12 1.800-22 10.200-25.700 21.700s-.7 24.200 7.900 32.700L137.800 329 113.200 474.700c-2 12 3 24.200 12.900 31.300s23 8 33.800 2.300l128.300-68.500 128.300 68.500c10.800 5.700 23.900 4.900 33.800-2.300s14.900-19.300 12.900-31.300L438.500 329 542.700 225.900c8.600-8.500 11.700-21.200 7.900-32.700s-13.700-19.900-25.700-21.700L381.200 150.300 316.900 18z"/></svg>
<span class="t" style="top:15.00px;font-size:14px;line-height:18px;letter-spacing:1.140px;left:459.34px;">5/5</span>
<span class="t" style="top:15.00px;font-size:14px;line-height:18px;color:#9ca3af;left:530.58px;">-</span>
<span class="t" style="top:15.00px;font-size:14px;line-height:18px;color:#9ca3af;left:571.48px;">-</span>
<svg class="i" style="left:966.30px;top:16.60px;" width="14.40" height="14.4" viewBox="0 0 512 512" fill="#2563eb"><path d="M471.600 21.700c-21.900-21.900-57.300-21.900-79.200 0L362.300 51.700l97.900 97.900 30.100-30.100c21.900-21.900 21.900-57.300 0-79.200L471.600 21.700zm-299.200 220c-6.100 6.100-10.800 13.600-13.500 21.900l-29.600 88.800c-2.900 8.600-.6 18.100 5.800 24.600s15.900 8.700 24.600 5.800l88.800-29.600c8.200-2.700 15.700-7.400 21.900-13.500L437.700 172.300 339.700 74.300 172.400 241.700zM96 64C43 64 0 107 0 160V416c0 53 43 96 96 96H352c53 0 96-43 96-96V320c0-17.700-14.300-32-32-32s-32 14.300-32 32v96c0 17.700-14.300 32-32 32H96c-17.700 0-32-14.300-32-32V160c0-17.700 14.300-32 32-32h96c17.700 0 32-14.300 32-32s-14.300-32-32-32H96z"/></svg><svg class="i" style="left:988.70px;top:16.30px;" width="12.78" height="14.6" viewBox="0 0 448 512" fill="#dc2626"><path d="M135.200 17.700L128 32H32C14.300 32 0 46.300 0 64S14.300 96 32 96H416c17.700 0 32-14.300 32-32s-14.300-32-32-32H320l-7.200-14.300C307.400 6.800 296.300 0 284.200 0H163.800c-12.100 0-23.200 6.800-28.600 17.700zM416 128H32L53.200 467c1.600 25.300 22.600 45 47.900 45H346.900c25.300 0 46.300-19.700 47.900-45L416 128z"/></svg>
</div>
<div class="row" style="top:250px">
<span class="num" style="left:1px;top:12px"></span>
<span class="t" style="top:16.00px;font-size:11.8px;line-height:16px;font-weight:bold;color:#ff0a84;left:5.86px;">11</span>
<span class="t" style="top:15.00px;font-size:14.3px;line-height:18px;letter-spacing:0.237px;left:32.03px;">Lewie</span>
<span class="st present" style="left:117px;top:12px;width:59px"></span><span class="t md" style="top:15.00px;font-size:12.0px;line-height:16px;color:#bbf7d0;letter-spacing:0.522px;left:124.38px;">present</span>
<svg class="i" style="left:204.10px;top:17.70px;" width="13.50" height="12" viewBox="0 0 576 512" fill="#3b82f6"><path d="M316.900 18C311.600 7 300.400 0 288.100 0s-23.400 7-28.800 18L195 150.300 51.400 171.500c-12 1.800-22 10.200-25.700 21.700s-.7 24.200 7.900 32.700L137.800 329 113.200 474.700c-2 12 3 24.200 12.900 31.300s23 8 33.800 2.300l128.300-68.500 128.300 68.500c10.800 5.700 23.900 4.900 33.800-2.300s14.900-19.300 12.900-31.300L438.500 329 542.700 225.900c8.600-8.500 11.700-21.200 7.900-32.700s-13.700-19.900-25.700-21.700L381.200 150.300 316.900 18z"/></svg>
<svg class="i" style="left:221.60px;top:17.70px;" width="13.50" height="12" viewBox="0 0 576 512" fill="#3b82f6"><path d="M316.900 18C311.600 7 300.400 0 288.100 0s-23.400 7-28.800 18L195 150.300 51.400 171.500c-12 1.800-22 10.200-25.700 21.700s-.7 24.200 7.900 32.700L137.800 329 113.200 474.700c-2 12 3 24.200 12.900 31.300s23 8 33.800 2.300l128.300-68.500 128.300 68.500c10.800 5.700 23.900 4.900 33.800-2.300s14.900-19.300 12.900-31.300L438.500 329 542.700 225.900c8.600-8.500 11.700-21.200 7.900-32.700s-13.700-19.900-25.700-21.700L381.200 150.300 316.900 18z"/></svg>
<svg class="i" style="left:239.10px;top:17.70px;" width="13.50" height="12" viewBox="0 0 576 512" fill="#3b82f6"><path d="M316.900 18C311.600 7 300.400 0 288.100 0s-23.400 7-28.800 18L195 150.300 51.400 171.500c-12 1.800-22 10.200-25.700 21.700s-.7 24.200 7.900 32.700L137.800 329 113.200 474.700c-2 12 3 24.200 12.900 31.300s23 8 33.800 2.300l128.300-68.500 128.300 68.500c10.800 5.700 23.900 4.900 33.800-2.300s14.900-19.300 12.900-31.300L438.500 329 542.700 225.900c8.600-8.500 11.700-21.200 7.900-32.700s-13.700-19.900-25.700-21.700L381.200 150.300 316.900 18z"/></svg>
<svg class="i" style="left:256.60px;top:17.70px;" width="13.50" height="12" viewBox="0 0 576 512" fill="#d1d5db"><path d="M316.900 18C311.600 7 300.400 0 288.100 0s-23.400 7-28.800 18L195 150.300 51.400 171.500c-12 1.800-22 10.200-25.700 21.700s-.7 24.200 7.900 32.700L137.800 329 113.200 474.700c-2 12 3 24.200 12.900 31.300s23 8 33.800 2.300l128.300-68.500 128.300 68.500c10.800 5.700 23.900 4.900 33.800-2.300s14.900-19.300 12.900-31.300L438.500 329 542.700 225.900c8.600-8.500 11.700-21.200 7.900-32.700s-13.700-19.900-25.700-21.700L381.200 150.300 316.900 18z"/></svg>
<svg class="i" style="left:274.10px;top:17.70px;" width="13.50" height="12" viewBox="0 0 576 512" fill="#d1d5db"><path d="M316.900 18C311.600 7 300.400 0 288.100 0s-23.400 7-28.800 18L195 150.300 51.400 171.500c-12 1.800-22 10.200-25.700 21.700s-.7 24.200 7.900 32.700L137.800 329 113.200 474.700c-2 12 3 24.200 12.900 31.300s23 8 33.800 2.300l128.300-68.500 128.300 68.500c10.800 5.700 23.900 4.900 33.800-2.300s14.900-19.300 12.900-31.300L438.500 329 542.700 225.900c8.600-8.500 11.700-21.200 7.900-32.700s-13.700-19.900-25.700-21.700L381.200 150.300 316.900 18z"/></svg>
<span class="t" style="top:15.00px;font-size:14px;line-height:18px;letter-spacing:1.126px;left:295.27px;">3/5</span>
<svg class="i" style="left:367.90px;top:17.70px;" width="13.50" height="12" viewBox="0 0 576 512" fill="#22c55e"><path d="M316.900 18C311.600 7 300.400 0 288.100 0s-23.400 7-28.800 18L195 150.300 51.400 171.500c-12 1.800-22 10.200-25.700 21.700s-.7 24.200 7.900 32.700L137.800 329 113.200 474.700c-2 12 3 24.200 12.900 31.300s23 8 33.800 2.300l128.300-68.500 128.300 68.500c10.800 5.700 23.900 4.900 33.800-2.300s14.900-19.300 12.900-31.300L438.500 329 542.700 225.900c8.600-8.500 11.700-21.200 7.900-32.700s-13.700-19.900-25.700-21.700L381.200 150.300 316.900 18z"/></svg>
<svg class="i" style="left:385.40px;top:17.70px;" width="13.50" height="12" viewBox="0 0 576 512" fill="#22c55e"><path d="M316.900 18C311.600 7 300.400 0 288.100 0s-23.400 7-28.800 18L195 150.300 51.400 171.500c-12 1.800-22 10.200-25.700 21.700s-.7 24.200 7.900 32.700L137.800 329 113.200 474.700c-2 12 3 24.200 12.900 31.300s23 8 33.800 2.300l128.300-68.500 128.300 68.500c10.800 5.700 23.900 4.900 33.800-2.300s14.900-19.300 12.900-31.300L438.500 329 542.700 225.900c8.600-8.500 11.700-21.200 7.900-32.700s-13.700-19.900-25.700-21.700L381.200 150.300 316.900 18z"/></svg>
<svg class="i" style="left:402.90px;top:17.70px;" width="13.50" height="12" viewBox="0 0 576 512" fill="#22c55e"><path d="M316.900 18C311.600 7 300.400 0 288.100 0s-23.400 7-28.800 18L195 150.300 51.400 171.500c-12 1.800-22 10.200-25.700 21.700s-.7 24.200 7.900 32.700L137.800 329 113.200 474.700c-2 12 3 24.200 12.900 31.300s23 8 33.800 2.300l128.300-68.500 128.300 68.500c10.800 5.700 23.900 4.900 33.800-2.300s14.900-19.300 12.900-31.300L438.500 329 542.700 225.900c8.600-8.500 11.700-21.200 7.900-32.700s-13.700-19.900-25.700-21.700L381.200 150.300 316.900 18z"/></svg>
<svg class="i" style="left:420.40px;top:17.70px;" width="13.50" height="12" viewBox="0 0 576 512" fill="#d1d5db"><path d="M316.900 18C311.600 7 300.400 0 288.100 0s-23.400 7-28.800 18L195 150.300 51.400 171.500c-12 1.800-22 10.200-25.700 21.700s-.7 24.200 7.900 32.700L137.800 329 113.200 474.700c-2 12 3 24.200 12.900 31.300s23 8 33.800 2.300l128.300-68.500 128.300 68.500c10.800 5.700 23.900 4.900 33.800-2.300s14.900-19.300 12.900-31.300L438.500 329 542.700 225.900c8.600-8.500 11.700-21.200 7.900-32.700s-13.700-19.900-25.700-21.700L381.200 150.300 316.900 18z"/></svg>
<svg class="i" style="left:437.90px;top:17.70px;" width="13.50" height="12" viewBox="0 0 576 512" fill="#d1d5db"><path d="M316.900 18C311.600 7 300.400 0 288.100 0s-23.400 7-28.800 18L195 150.300 51.400 171.500c-12 1.800-22 10.200-25.700 21.700s-.7 24.200 7.900 32.700L137.800 329 113.200 474.700c-2 12 3 24.200 12.900 31.300s23 8 33.800 2.300l128.300-68.500 128.300 68.500c10.800 5.700 23.900 4.900 33.800-2.300s14.900-19.300 12.900-31.300L438.500 329 542.700 225.900c8.600-8.500 11.700-21.200 7.900-32.700s-13.700-19.900-25.700-21.700L381.200 150.300 316.900 18z"/></svg>
<span class="t" style="top:15.00px;font-size:14px;line-height:18px;letter-spacing:1.126px;left:459.37px;">3/5</span>
<span class="t" style="top:15.00px;font-size:14px;line-height:18px;color:#9ca3af;left:530.58px;">-</span>
<span class="t" style="top:15.00px;font-size:14px;line-height:18px;color:#9ca3af;left:571.48px;">-</span>
<svg class="i" style="left:966.30px;top:16.60px;" width="14.40" height="14.4" viewBox="0 0 512 512" fill="#2563eb"><path d="M471.600 21.700c-21.900-21.900-57.300-21.900-79.200 0L362.300 51.700l97.900 97.900 30.100-30.100c21.900-21.900 21.900-57.300 0-79.200L471.600 21.700zm-299.200 220c-6.100 6.100-10.800 13.600-13.500 21.900l-29.600 88.800c-2.900 8.600-.6 18.100 5.800 24.600s15.900 8.700 24.600 5.800l88.800-29.600c8.200-2.700 15.700-7.400 21.900-13.500L437.700 172.300 339.700 74.300 172.400 241.700zM96 64C43 64 0 107 0 160V416c0 53 43 96 96 96H352c53 0 96-43 96-96V320c0-17.700-14.300-32-32-32s-32 14.300-32 32v96c0 17.700-14.300 32-32 32H96c-17.700 0-32-14.300-32-32V160c0-17.700 14.300-32 32-32h96c17.700 0 32-14.300 32-32s-14.300-32-32-32H96z"/></svg><svg class="i" style="left:988.70px;top:16.30px;" width="12.78" height="14.6" viewBox="0 0 448 512" fill="#dc2626"><path d="M135.200 17.700L128 32H32C14.300 32 0 46.300 0 64S14.300 96 32 96H416c17.700 0 32-14.300 32-32s-14.300-32-32-32H320l-7.200-14.300C307.400 6.800 296.300 0 284.200 0H163.800c-12.100 0-23.200 6.800-28.600 17.700zM416 128H32L53.200 467c1.600 25.300 22.600 45 47.900 45H346.900c25.300 0 46.300-19.700 47.900-45L416 128z"/></svg>
</div>
<div class="row" style="top:299px">
<span class="num" style="left:1px;top:12px"></span>
<span class="t" style="top:16.00px;font-size:11.8px;line-height:16px;font-weight:bold;color:#ff0a84;left:5.86px;">16</span>
<span class="t" style="top:15.00px;font-size:14.3px;line-height:18px;letter-spacing:-0.257px;left:32.55px;">Sam</span>
<span class="st present" style="left:117px;top:12px;width:59px"></span><span class="t md" style="top:15.00px;font-size:12.0px;line-height:16px;color:#bbf7d0;letter-spacing:0.522px;left:124.38px;">present</span>
<svg class="i" style="left:204.10px;top:17.70px;" width="13.50" height="12" viewBox="0 0 576 512" fill="#3b82f6"><path d="M316.900 18C311.600 7 300.400 0 288.100 0s-23.400 7-28.800 18L195 150.300 51.400 171.500c-12 1.800-22 10.200-25.700 21.700s-.7 24.200 7.900 32.700L137.800 329 113.200 474.700c-2 12 3 24.200 12.900 31.300s23 8 33.800 2.300l128.300-68.500 128.300 68.500c10.800 5.700 23.900 4.900 33.800-2.300s14.900-19.300 12.900-31.300L438.500 329 542.700 225.900c8.600-8.500 11.700-21.200 7.900-32.700s-13.700-19.900-25.700-21.700L381.200 150.300 316.900 18z"/></svg>
<svg class="i" style="left:221.60px;top:17.70px;" width="13.50" height="12" viewBox="0 0 576 512" fill="#3b82f6"><path d="M316.900 18C311.600 7 300.400 0 288.100 0s-23.400 7-28.800 18L195 150.300 51.400 171.500c-12 1.800-22 10.200-25.700 21.700s-.7 24.200 7.900 32.700L137.800 329 113.200 474.700c-2 12 3 24.200 12.900 31.300s23 8 33.800 2.300l128.300-68.500 128.300 68.500c10.800 5.700 23.900 4.900 33.800-2.300s14.900-19.300 12.900-31.300L438.500 329 542.700 225.900c8.600-8.500 11.700-21.200 7.900-32.700s-13.700-19.900-25.700-21.700L381.200 150.300 316.900 18z"/></svg>
<svg class="i" style="left:239.10px;top:17.70px;" width="13.50" height="12" viewBox="0 0 576 512" fill="#3b82f6"><path d="M316.900 18C311.600 7 300.400 0 288.100 0s-23.400 7-28.800 18L195 150.300 51.400 171.500c-12 1.800-22 10.200-25.700 21.700s-.7 24.200 7.900 32.700L137.800 329 113.200 474.700c-2 12 3 24.200 12.900 31.300s23 8 33.800 2.300l128.300-68.500 128.300 68.500c10.800 5.700 23.900 4.900 33.800-2.300s14.900-19.300 12.900-31.300L438.500 329 542.700 225.900c8.600-8.500 11.700-21.200 7.900-32.700s-13.700-19.900-25.700-21.700L381.200 150.300 316.900 18z"/></svg>
<svg class="i" style="left:256.60px;top:17.70px;" width="13.50" height="12" viewBox="0 0 576 512" fill="#d1d5db"><path d="M316.900 18C311.600 7 300.400 0 288.100 0s-23.400 7-28.800 18L195 150.300 51.400 171.500c-12 1.800-22 10.200-25.700 21.700s-.7 24.200 7.900 32.700L137.800 329 113.200 474.700c-2 12 3 24.200 12.900 31.300s23 8 33.800 2.300l128.300-68.500 128.300 68.500c10.800 5.700 23.900 4.900 33.800-2.300s14.900-19.300 12.900-31.300L438.500 329 542.700 225.900c8.600-8.500 11.700-21.200 7.900-32.700s-13.700-19.900-25.700-21.700L381.200 150.300 316.900 18z"/></svg>
<svg class="i" style="left:274.10px;top:17.70px;" width="13.50" height="12" viewBox="0 0 576 512" fill="#d1d5db"><path d="M316.900 18C311.600 7 300.400 0 288.100 0s-23.400 7-28.800 18L195 150.300 51.400 171.500c-12 1.800-22 10.200-25.700 21.700s-.7 24.200 7.900 32.700L137.800 329 113.200 474.700c-2 12 3 24.200 12.900 31.300s23 8 33.800 2.300l128.300-68.500 128.300 68.500c10.800 5.700 23.900 4.900 33.800-2.300s14.900-19.300 12.900-31.300L438.500 329 542.700 225.900c8.600-8.500 11.700-21.200 7.900-32.700s-13.700-19.900-25.700-21.700L381.200 150.300 316.900 18z"/></svg>
<span class="t" style="top:15.00px;font-size:14px;line-height:18px;letter-spacing:1.126px;left:295.27px;">3/5</span>
<svg class="i" style="left:367.90px;top:17.70px;" width="13.50" height="12" viewBox="0 0 576 512" fill="#22c55e"><path d="M316.900 18C311.600 7 300.400 0 288.100 0s-23.400 7-28.800 18L195 150.300 51.400 171.500c-12 1.800-22 10.200-25.700 21.700s-.7 24.200 7.900 32.700L137.800 329 113.200 474.700c-2 12 3 24.200 12.900 31.300s23 8 33.800 2.300l128.300-68.500 128.300 68.500c10.800 5.700 23.900 4.900 33.800-2.300s14.900-19.300 12.900-31.300L438.500 329 542.700 225.900c8.600-8.500 11.700-21.200 7.900-32.700s-13.700-19.900-25.700-21.700L381.200 150.300 316.900 18z"/></svg>
<svg class="i" style="left:385.40px;top:17.70px;" width="13.50" height="12" viewBox="0 0 576 512" fill="#22c55e"><path d="M316.900 18C311.600 7 300.400 0 288.100 0s-23.400 7-28.800 18L195 150.300 51.400 171.500c-12 1.800-22 10.200-25.700 21.700s-.7 24.200 7.900 32.700L137.800 329 113.200 474.700c-2 12 3 24.200 12.900 31.300s23 8 33.800 2.300l128.300-68.500 128.300 68.500c10.800 5.700 23.900 4.900 33.800-2.300s14.900-19.300 12.900-31.300L438.500 329 542.700 225.900c8.600-8.500 11.700-21.200 7.900-32.700s-13.700-19.900-25.700-21.700L381.200 150.300 316.900 18z"/></svg>
<svg class="i" style="left:402.90px;top:17.70px;" width="13.50" height="12" viewBox="0 0 576 512" fill="#22c55e"><path d="M316.900 18C311.600 7 300.400 0 288.100 0s-23.400 7-28.800 18L195 150.300 51.400 171.500c-12 1.800-22 10.200-25.700 21.700s-.7 24.200 7.900 32.700L137.800 329 113.200 474.700c-2 12 3 24.200 12.900 31.300s23 8 33.800 2.300l128.300-68.500 128.300 68.500c10.800 5.700 23.900 4.900 33.800-2.300s14.900-19.300 12.900-31.300L438.500 329 542.700 225.900c8.600-8.500 11.700-21.200 7.900-32.700s-13.700-19.900-25.700-21.700L381.200 150.300 316.900 18z"/></svg>
<svg class="i" style="left:420.40px;top:17.70px;" width="13.50" height="12" viewBox="0 0 576 512" fill="#d1d5db"><path d="M316.900 18C311.600 7 300.400 0 288.100 0s-23.400 7-28.800 18L195 150.300 51.400 171.500c-12 1.800-22 10.200-25.700 21.700s-.7 24.200 7.900 32.700L137.800 329 113.200 474.700c-2 12 3 24.200 12.900 31.300s23 8 33.800 2.300l128.300-68.500 128.300 68.500c10.800 5.700 23.900 4.900 33.800-2.300s14.900-19.300 12.900-31.300L438.500 329 542.700 225.900c8.600-8.500 11.700-21.200 7.900-32.700s-13.700-19.900-25.700-21.700L381.200 150.300 316.900 18z"/></svg>
<svg class="i" style="left:437.90px;top:17.70px;" width="13.50" height="12" viewBox="0 0 576 512" fill="#d1d5db"><path d="M316.900 18C311.600 7 300.400 0 288.100 0s-23.400 7-28.800 18L195 150.300 51.400 171.500c-12 1.800-22 10.200-25.700 21.700s-.7 24.200 7.900 32.700L137.800 329 113.200 474.700c-2 12 3 24.200 12.900 31.300s23 8 33.800 2.300l128.300-68.500 128.300 68.500c10.800 5.700 23.900 4.900 33.800-2.300s14.900-19.300 12.900-31.300L438.500 329 542.700 225.900c8.600-8.500 11.700-21.200 7.900-32.700s-13.700-19.900-25.700-21.700L381.200 150.300 316.900 18z"/></svg>
<span class="t" style="top:15.00px;font-size:14px;line-height:18px;letter-spacing:1.126px;left:459.37px;">3/5</span>
<span class="t" style="top:15.00px;font-size:14px;line-height:18px;color:#9ca3af;left:530.58px;">-</span>
<span class="t" style="top:15.00px;font-size:14px;line-height:18px;color:#9ca3af;left:571.48px;">-</span>
<svg class="i" style="left:966.30px;top:16.60px;" width="14.40" height="14.4" viewBox="0 0 512 512" fill="#2563eb"><path d="M471.600 21.700c-21.900-21.900-57.300-21.900-79.200 0L362.300 51.700l97.900 97.900 30.100-30.100c21.900-21.900 21.900-57.300 0-79.200L471.600 21.700zm-299.200 220c-6.100 6.100-10.800 13.600-13.500 21.900l-29.600 88.800c-2.900 8.600-.6 18.100 5.800 24.600s15.900 8.700 24.600 5.800l88.800-29.600c8.200-2.700 15.700-7.400 21.900-13.500L437.700 172.300 339.700 74.300 172.400 241.700zM96 64C43 64 0 107 0 160V416c0 53 43 96 96 96H352c53 0 96-43 96-96V320c0-17.700-14.300-32-32-32s-32 14.300-32 32v96c0 17.700-14.300 32-32 32H96c-17.700 0-32-14.300-32-32V160c0-17.700 14.300-32 32-32h96c17.700 0 32-14.300 32-32s-14.300-32-32-32H96z"/></svg><svg class="i" style="left:988.70px;top:16.30px;" width="12.78" height="14.6" viewBox="0 0 448 512" fill="#dc2626"><path d="M135.200 17.700L128 32H32C14.300 32 0 46.300 0 64S14.300 96 32 96H416c17.700 0 32-14.300 32-32s-14.300-32-32-32H320l-7.200-14.300C307.400 6.800 296.300 0 284.200 0H163.800c-12.100 0-23.200 6.800-28.600 17.700zM416 128H32L53.200 467c1.600 25.300 22.600 45 47.900 45H346.900c25.300 0 46.300-19.700 47.900-45L416 128z"/></svg>
</div>
<div class="row" style="top:348px">
<span class="num" style="left:1px;top:12px"></span>
<span class="t" style="top:16.00px;font-size:11.8px;line-height:16px;font-weight:bold;color:#ff0a84;left:9.62px;">4</span>
<span class="t" style="top:15.00px;font-size:14.3px;line-height:18px;letter-spacing:0.806px;left:32.03px;">Max</span>
<span class="st absent" style="left:117px;top:12px;width:54px"></span><span class="t md" style="top:15.00px;font-size:12.0px;line-height:16px;color:#fecaca;letter-spacing:0.253px;left:124.64px;">absent</span>
<span class="t" style="top:15.00px;font-size:14px;line-height:18px;color:#9ca3af;left:203.78px;">-</span><span class="t" style="top:15.00px;font-size:14px;line-height:18px;color:#9ca3af;left:367.38px;">-</span>
<span class="t" style="top:15.00px;font-size:14px;line-height:18px;color:#9ca3af;left:530.58px;">-</span>
<span class="t" style="top:15.00px;font-size:14px;line-height:18px;color:#9ca3af;left:571.48px;">-</span>
<svg class="i" style="left:966.30px;top:16.60px;" width="14.40" height="14.4" viewBox="0 0 512 512" fill="#2563eb"><path d="M471.600 21.700c-21.900-21.900-57.300-21.900-79.200 0L362.300 51.700l97.900 97.900 30.100-30.100c21.900-21.900 21.900-57.300 0-79.200L471.600 21.700zm-299.200 220c-6.100 6.100-10.800 13.600-13.500 21.900l-29.600 88.800c-2.900 8.600-.6 18.100 5.800 24.600s15.900 8.700 24.600 5.800l88.800-29.600c8.200-2.700 15.700-7.400 21.900-13.500L437.700 172.300 339.700 74.300 172.400 241.700zM96 64C43 64 0 107 0 160V416c0 53 43 96 96 96H352c53 0 96-43 96-96V320c0-17.700-14.300-32-32-32s-32 14.300-32 32v96c0 17.700-14.300 32-32 32H96c-17.700 0-32-14.300-32-32V160c0-17.700 14.300-32 32-32h96c17.700 0 32-14.300 32-32s-14.300-32-32-32H96z"/></svg><svg class="i" style="left:988.70px;top:16.30px;" width="12.78" height="14.6" viewBox="0 0 448 512" fill="#dc2626"><path d="M135.200 17.700L128 32H32C14.300 32 0 46.300 0 64S14.300 96 32 96H416c17.700 0 32-14.300 32-32s-14.300-32-32-32H320l-7.200-14.300C307.400 6.800 296.300 0 284.200 0H163.800c-12.100 0-23.200 6.800-28.600 17.700zM416 128H32L53.200 467c1.600 25.300 22.600 45 47.900 45H346.900c25.300 0 46.300-19.700 47.900-45L416 128z"/></svg>
</div>
<div class="row" style="top:397px">
<span class="num" style="left:1px;top:12px"></span>
<span class="t" style="top:16.00px;font-size:11.8px;line-height:16px;font-weight:bold;color:#ff0a84;left:9.29px;">7</span>
<span class="t" style="top:15.00px;font-size:14.3px;line-height:18px;letter-spacing:0.387px;left:32.03px;">Harry</span>
<span class="st absent" style="left:117px;top:12px;width:54px"></span><span class="t md" style="top:15.00px;font-size:12.0px;line-height:16px;color:#fecaca;letter-spacing:0.253px;left:124.64px;">absent</span>
<span class="t" style="top:15.00px;font-size:14px;line-height:18px;color:#9ca3af;left:203.78px;">-</span><span class="t" style="top:15.00px;font-size:14px;line-height:18px;color:#9ca3af;left:367.38px;">-</span>
<span class="t" style="top:15.00px;font-size:14px;line-height:18px;color:#9ca3af;left:530.58px;">-</span>
<span class="t" style="top:15.00px;font-size:14px;line-height:18px;color:#9ca3af;left:571.48px;">-</span>
<svg class="i" style="left:966.30px;top:16.60px;" width="14.40" height="14.4" viewBox="0 0 512 512" fill="#2563eb"><path d="M471.600 21.700c-21.900-21.900-57.300-21.900-79.200 0L362.300 51.700l97.900 97.900 30.100-30.100c21.900-21.900 21.900-57.300 0-79.200L471.600 21.700zm-299.200 220c-6.100 6.100-10.800 13.600-13.500 21.900l-29.600 88.800c-2.900 8.600-.6 18.100 5.800 24.600s15.900 8.700 24.600 5.800l88.800-29.600c8.200-2.700 15.700-7.400 21.900-13.500L437.700 172.300 339.700 74.300 172.400 241.700zM96 64C43 64 0 107 0 160V416c0 53 43 96 96 96H352c53 0 96-43 96-96V320c0-17.700-14.300-32-32-32s-32 14.300-32 32v96c0 17.700-14.300 32-32 32H96c-17.700 0-32-14.300-32-32V160c0-17.700 14.300-32 32-32h96c17.700 0 32-14.300 32-32s-14.300-32-32-32H96z"/></svg><svg class="i" style="left:988.70px;top:16.30px;" width="12.78" height="14.6" viewBox="0 0 448 512" fill="#dc2626"><path d="M135.200 17.700L128 32H32C14.300 32 0 46.300 0 64S14.300 96 32 96H416c17.700 0 32-14.300 32-32s-14.300-32-32-32H320l-7.200-14.300C307.400 6.800 296.300 0 284.200 0H163.800c-12.100 0-23.200 6.800-28.600 17.700zM416 128H32L53.200 467c1.600 25.300 22.600 45 47.900 45H346.900c25.300 0 46.300-19.700 47.900-45L416 128z"/></svg>
</div>
<div class="row" style="top:446px">
<span class="num" style="left:1px;top:12px"></span>
<span class="t" style="top:16.00px;font-size:11.8px;line-height:16px;font-weight:bold;color:#ff0a84;left:5.86px;">17</span>
<span class="t" style="top:15.00px;font-size:14.3px;line-height:18px;letter-spacing:0.170px;left:32.03px;">Mason</span>
<span class="st present" style="left:117px;top:12px;width:59px"></span><span class="t md" style="top:15.00px;font-size:12.0px;line-height:16px;color:#bbf7d0;letter-spacing:0.522px;left:124.38px;">present</span>
<svg class="i" style="left:204.10px;top:17.70px;" width="13.50" height="12" viewBox="0 0 576 512" fill="#3b82f6"><path d="M316.900 18C311.600 7 300.400 0 288.100 0s-23.400 7-28.800 18L195 150.300 51.400 171.500c-12 1.800-22 10.200-25.700 21.700s-.7 24.200 7.900 32.700L137.800 329 113.200 474.700c-2 12 3 24.200 12.900 31.300s23 8 33.800 2.300l128.300-68.500 128.300 68.500c10.800 5.700 23.900 4.900 33.800-2.300s14.900-19.300 12.900-31.300L438.500 329 542.700 225.900c8.600-8.500 11.700-21.200 7.900-32.700s-13.700-19.900-25.700-21.700L381.200 150.300 316.900 18z"/></svg>
<svg class="i" style="left:221.60px;top:17.70px;" width="13.50" height="12" viewBox="0 0 576 512" fill="#3b82f6"><path d="M316.900 18C311.600 7 300.400 0 288.100 0s-23.400 7-28.800 18L195 150.300 51.400 171.500c-12 1.800-22 10.200-25.700 21.700s-.7 24.200 7.900 32.700L137.800 329 113.200 474.700c-2 12 3 24.200 12.900 31.300s23 8 33.800 2.300l128.300-68.500 128.300 68.500c10.800 5.700 23.900 4.900 33.800-2.300s14.900-19.300 12.900-31.300L438.500 329 542.700 225.900c8.600-8.500 11.700-21.200 7.900-32.700s-13.700-19.900-25.700-21.700L381.200 150.300 316.900 18z"/></svg>
<svg class="i" style="left:239.10px;top:17.70px;" width="13.50" height="12" viewBox="0 0 576 512" fill="#d1d5db"><path d="M316.900 18C311.600 7 300.400 0 288.100 0s-23.400 7-28.800 18L195 150.300 51.400 171.500c-12 1.800-22 10.200-25.700 21.700s-.7 24.200 7.900 32.700L137.800 329 113.200 474.700c-2 12 3 24.200 12.900 31.300s23 8 33.800 2.300l128.300-68.500 128.300 68.500c10.800 5.700 23.900 4.900 33.800-2.300s14.900-19.300 12.900-31.300L438.500 329 542.700 225.900c8.600-8.500 11.700-21.200 7.900-32.700s-13.700-19.900-25.700-21.700L381.200 150.300 316.900 18z"/></svg>
<svg class="i" style="left:256.60px;top:17.70px;" width="13.50" height="12" viewBox="0 0 576 512" fill="#d1d5db"><path d="M316.900 18C311.600 7 300.400 0 288.100 0s-23.400 7-28.800 18L195 150.300 51.400 171.500c-12 1.800-22 10.200-25.700 21.700s-.7 24.200 7.900 32.700L137.800 329 113.200 474.700c-2 12 3 24.200 12.900 31.300s23 8 33.800 2.300l128.300-68.500 128.300 68.500c10.800 5.700 23.900 4.900 33.800-2.300s14.900-19.300 12.900-31.300L438.500 329 542.700 225.900c8.600-8.500 11.700-21.200 7.900-32.700s-13.700-19.900-25.700-21.700L381.200 150.300 316.900 18z"/></svg>
<svg class="i" style="left:274.10px;top:17.70px;" width="13.50" height="12" viewBox="0 0 576 512" fill="#d1d5db"><path d="M316.900 18C311.600 7 300.400 0 288.100 0s-23.400 7-28.800 18L195 150.300 51.400 171.500c-12 1.800-22 10.200-25.700 21.700s-.7 24.200 7.900 32.700L137.800 329 113.200 474.700c-2 12 3 24.200 12.900 31.300s23 8 33.800 2.300l128.300-68.500 128.300 68.500c10.800 5.700 23.900 4.900 33.800-2.300s14.900-19.300 12.900-31.300L438.500 329 542.700 225.900c8.600-8.500 11.700-21.200 7.900-32.700s-13.700-19.900-25.700-21.700L381.200 150.300 316.900 18z"/></svg>
<span class="t" style="top:15.00px;font-size:14px;line-height:18px;letter-spacing:1.212px;left:295.10px;">2/5</span>
<svg class="i" style="left:367.90px;top:17.70px;" width="13.50" height="12" viewBox="0 0 576 512" fill="#22c55e"><path d="M316.900 18C311.600 7 300.400 0 288.100 0s-23.400 7-28.800 18L195 150.300 51.400 171.500c-12 1.800-22 10.200-25.700 21.700s-.7 24.200 7.900 32.700L137.800 329 113.200 474.700c-2 12 3 24.200 12.900 31.300s23 8 33.800 2.300l128.300-68.500 128.300 68.500c10.800 5.700 23.900 4.900 33.800-2.300s14.900-19.300 12.900-31.300L438.500 329 542.700 225.900c8.600-8.500 11.700-21.200 7.900-32.700s-13.700-19.900-25.700-21.700L381.200 150.300 316.900 18z"/></svg>
<svg class="i" style="left:385.40px;top:17.70px;" width="13.50" height="12" viewBox="0 0 576 512" fill="#22c55e"><path d="M316.900 18C311.600 7 300.400 0 288.100 0s-23.400 7-28.800 18L195 150.300 51.400 171.500c-12 1.800-22 10.200-25.700 21.700s-.7 24.200 7.900 32.700L137.800 329 113.200 474.700c-2 12 3 24.200 12.900 31.300s23 8 33.800 2.300l128.300-68.500 128.300 68.500c10.800 5.700 23.900 4.900 33.800-2.300s14.900-19.300 12.900-31.300L438.500 329 542.700 225.900c8.600-8.500 11.700-21.200 7.900-32.700s-13.700-19.900-25.700-21.700L381.200 150.300 316.900 18z"/></svg>
<svg class="i" style="left:402.90px;top:17.70px;" width="13.50" height="12" viewBox="0 0 576 512" fill="#d1d5db"><path d="M316.900 18C311.600 7 300.400 0 288.100 0s-23.400 7-28.800 18L195 150.300 51.400 171.500c-12 1.800-22 10.200-25.700 21.700s-.7 24.200 7.900 32.700L137.800 329 113.200 474.700c-2 12 3 24.200 12.900 31.300s23 8 33.800 2.300l128.300-68.500 128.300 68.500c10.800 5.700 23.900 4.900 33.800-2.300s14.900-19.300 12.900-31.300L438.500 329 542.700 225.900c8.600-8.500 11.700-21.200 7.900-32.700s-13.700-19.900-25.700-21.700L381.200 150.300 316.900 18z"/></svg>
<svg class="i" style="left:420.40px;top:17.70px;" width="13.50" height="12" viewBox="0 0 576 512" fill="#d1d5db"><path d="M316.900 18C311.600 7 300.400 0 288.100 0s-23.400 7-28.800 18L195 150.300 51.400 171.500c-12 1.800-22 10.200-25.700 21.700s-.7 24.200 7.900 32.700L137.800 329 113.200 474.700c-2 12 3 24.200 12.900 31.300s23 8 33.800 2.300l128.300-68.500 128.300 68.500c10.800 5.700 23.900 4.900 33.800-2.300s14.900-19.300 12.900-31.300L438.500 329 542.700 225.900c8.600-8.500 11.700-21.200 7.900-32.700s-13.700-19.900-25.700-21.700L381.200 150.300 316.900 18z"/></svg>
<svg class="i" style="left:437.90px;top:17.70px;" width="13.50" height="12" viewBox="0 0 576 512" fill="#d1d5db"><path d="M316.900 18C311.600 7 300.400 0 288.100 0s-23.400 7-28.800 18L195 150.300 51.400 171.500c-12 1.800-22 10.200-25.700 21.700s-.7 24.200 7.900 32.700L137.800 329 113.200 474.700c-2 12 3 24.200 12.900 31.300s23 8 33.800 2.300l128.300-68.500 128.300 68.500c10.800 5.700 23.900 4.900 33.800-2.300s14.900-19.300 12.900-31.300L438.500 329 542.700 225.900c8.600-8.500 11.700-21.200 7.900-32.700s-13.700-19.900-25.700-21.700L381.200 150.300 316.900 18z"/></svg>
<span class="t" style="top:15.00px;font-size:14px;line-height:18px;letter-spacing:1.212px;left:459.20px;">2/5</span>
<span class="t" style="top:15.00px;font-size:14px;line-height:18px;color:#9ca3af;left:530.58px;">-</span>
<span class="t" style="top:15.00px;font-size:14px;line-height:18px;letter-spacing:0.044px;left:571.79px;">The lad is still injured. His knee is a problem</span>
<svg class="i" style="left:966.30px;top:16.60px;" width="14.40" height="14.4" viewBox="0 0 512 512" fill="#2563eb"><path d="M471.600 21.700c-21.900-21.900-57.300-21.900-79.200 0L362.300 51.700l97.900 97.900 30.100-30.100c21.900-21.900 21.900-57.300 0-79.200L471.600 21.700zm-299.200 220c-6.100 6.100-10.800 13.600-13.500 21.900l-29.600 88.800c-2.900 8.600-.6 18.100 5.800 24.600s15.900 8.700 24.600 5.800l88.800-29.600c8.200-2.700 15.700-7.400 21.900-13.500L437.700 172.300 339.700 74.300 172.400 241.700zM96 64C43 64 0 107 0 160V416c0 53 43 96 96 96H352c53 0 96-43 96-96V320c0-17.700-14.300-32-32-32s-32 14.300-32 32v96c0 17.700-14.300 32-32 32H96c-17.700 0-32-14.300-32-32V160c0-17.700 14.300-32 32-32h96c17.700 0 32-14.300 32-32s-14.300-32-32-32H96z"/></svg><svg class="i" style="left:988.70px;top:16.30px;" width="12.78" height="14.6" viewBox="0 0 448 512" fill="#dc2626"><path d="M135.200 17.700L128 32H32C14.300 32 0 46.300 0 64S14.300 96 32 96H416c17.700 0 32-14.300 32-32s-14.300-32-32-32H320l-7.200-14.300C307.400 6.800 296.300 0 284.200 0H163.800c-12.100 0-23.200 6.800-28.600 17.700zM416 128H32L53.200 467c1.600 25.300 22.600 45 47.900 45H346.900c25.300 0 46.300-19.700 47.900-45L416 128z"/></svg>
</div>
<div class="row" style="top:495px">
<span class="num" style="left:1px;top:12px"></span>
<span class="t" style="top:16.00px;font-size:11.8px;line-height:16px;font-weight:bold;color:#ff0a84;left:5.86px;">18</span>
<span class="t" style="top:15.00px;font-size:14.3px;line-height:18px;letter-spacing:-0.206px;left:32.52px;">Oscar</span>
<span class="st present" style="left:117px;top:12px;width:59px"></span><span class="t md" style="top:15.00px;font-size:12.0px;line-height:16px;color:#bbf7d0;letter-spacing:0.522px;left:124.38px;">present</span>
<svg class="i" style="left:204.10px;top:17.70px;" width="13.50" height="12" viewBox="0 0 576 512" fill="#3b82f6"><path d="M316.900 18C311.600 7 300.400 0 288.100 0s-23.400 7-28.800 18L195 150.300 51.400 171.500c-12 1.800-22 10.200-25.700 21.700s-.7 24.200 7.900 32.700L137.800 329 113.200 474.700c-2 12 3 24.200 12.900 31.300s23 8 33.800 2.300l128.300-68.500 128.300 68.500c10.800 5.700 23.900 4.900 33.800-2.300s14.900-19.300 12.900-31.300L438.500 329 542.700 225.900c8.600-8.500 11.700-21.200 7.900-32.700s-13.700-19.900-25.700-21.700L381.200 150.300 316.900 18z"/></svg>
<svg class="i" style="left:221.60px;top:17.70px;" width="13.50" height="12" viewBox="0 0 576 512" fill="#3b82f6"><path d="M316.900 18C311.600 7 300.400 0 288.100 0s-23.400 7-28.800 18L195 150.300 51.400 171.500c-12 1.800-22 10.200-25.700 21.700s-.7 24.200 7.900 32.700L137.800 329 113.200 474.700c-2 12 3 24.200 12.900 31.300s23 8 33.800 2.300l128.300-68.500 128.300 68.500c10.800 5.700 23.900 4.900 33.800-2.300s14.900-19.300 12.900-31.300L438.500 329 542.700 225.900c8.600-8.500 11.700-21.200 7.900-32.700s-13.700-19.900-25.700-21.700L381.200 150.300 316.900 18z"/></svg>
<svg class="i" style="left:239.10px;top:17.70px;" width="13.50" height="12" viewBox="0 0 576 512" fill="#3b82f6"><path d="M316.900 18C311.600 7 300.400 0 288.100 0s-23.400 7-28.800 18L195 150.300 51.400 171.500c-12 1.800-22 10.200-25.700 21.700s-.7 24.200 7.900 32.700L137.800 329 113.200 474.700c-2 12 3 24.200 12.900 31.300s23 8 33.800 2.300l128.300-68.500 128.300 68.500c10.800 5.700 23.900 4.900 33.800-2.300s14.900-19.300 12.900-31.300L438.500 329 542.700 225.900c8.600-8.500 11.700-21.200 7.900-32.700s-13.700-19.900-25.700-21.700L381.200 150.300 316.900 18z"/></svg>
<svg class="i" style="left:256.60px;top:17.70px;" width="13.50" height="12" viewBox="0 0 576 512" fill="#3b82f6"><path d="M316.900 18C311.600 7 300.400 0 288.100 0s-23.400 7-28.800 18L195 150.300 51.400 171.500c-12 1.800-22 10.200-25.700 21.700s-.7 24.200 7.900 32.700L137.800 329 113.200 474.700c-2 12 3 24.200 12.900 31.300s23 8 33.800 2.300l128.300-68.500 128.300 68.500c10.800 5.700 23.900 4.900 33.800-2.300s14.900-19.300 12.900-31.300L438.500 329 542.700 225.900c8.600-8.500 11.700-21.200 7.900-32.700s-13.700-19.900-25.700-21.700L381.200 150.300 316.900 18z"/></svg>
<svg class="i" style="left:274.10px;top:17.70px;" width="13.50" height="12" viewBox="0 0 576 512" fill="#d1d5db"><path d="M316.900 18C311.600 7 300.400 0 288.100 0s-23.400 7-28.800 18L195 150.300 51.400 171.500c-12 1.800-22 10.200-25.700 21.700s-.7 24.200 7.900 32.700L137.800 329 113.200 474.700c-2 12 3 24.200 12.900 31.300s23 8 33.800 2.300l128.300-68.500 128.300 68.500c10.800 5.700 23.900 4.900 33.800-2.300s14.900-19.300 12.900-31.300L438.500 329 542.700 225.900c8.600-8.500 11.700-21.200 7.900-32.700s-13.700-19.900-25.700-21.700L381.200 150.300 316.900 18z"/></svg>
<span class="t" style="top:15.00px;font-size:14px;line-height:18px;letter-spacing:1.020px;left:295.48px;">4/5</span>
<svg class="i" style="left:367.90px;top:17.70px;" width="13.50" height="12" viewBox="0 0 576 512" fill="#22c55e"><path d="M316.900 18C311.600 7 300.400 0 288.100 0s-23.400 7-28.800 18L195 150.300 51.400 171.500c-12 1.800-22 10.200-25.700 21.700s-.7 24.200 7.900 32.700L137.800 329 113.200 474.700c-2 12 3 24.200 12.900 31.300s23 8 33.800 2.300l128.300-68.500 128.300 68.500c10.800 5.700 23.900 4.900 33.800-2.300s14.900-19.300 12.900-31.300L438.500 329 542.700 225.900c8.600-8.500 11.700-21.200 7.900-32.700s-13.700-19.900-25.700-21.700L381.200 150.300 316.900 18z"/></svg>
<svg class="i" style="left:385.40px;top:17.70px;" width="13.50" height="12" viewBox="0 0 576 512" fill="#22c55e"><path d="M316.900 18C311.600 7 300.400 0 288.100 0s-23.400 7-28.800 18L195 150.300 51.400 171.500c-12 1.800-22 10.200-25.700 21.700s-.7 24.200 7.900 32.700L137.800 329 113.200 474.700c-2 12 3 24.200 12.900 31.300s23 8 33.800 2.300l128.300-68.500 128.300 68.500c10.800 5.700 23.900 4.900 33.800-2.300s14.900-19.300 12.900-31.300L438.500 329 542.700 225.900c8.600-8.500 11.700-21.200 7.900-32.700s-13.700-19.900-25.700-21.700L381.200 150.300 316.900 18z"/></svg>
<svg class="i" style="left:402.90px;top:17.70px;" width="13.50" height="12" viewBox="0 0 576 512" fill="#22c55e"><path d="M316.900 18C311.600 7 300.400 0 288.100 0s-23.400 7-28.800 18L195 150.300 51.400 171.500c-12 1.800-22 10.200-25.700 21.700s-.7 24.200 7.900 32.700L137.800 329 113.200 474.700c-2 12 3 24.200 12.900 31.300s23 8 33.800 2.300l128.300-68.500 128.300 68.500c10.800 5.700 23.900 4.900 33.800-2.300s14.900-19.300 12.900-31.300L438.500 329 542.700 225.900c8.600-8.500 11.700-21.200 7.900-32.700s-13.700-19.900-25.700-21.700L381.200 150.300 316.900 18z"/></svg>
<svg class="i" style="left:420.40px;top:17.70px;" width="13.50" height="12" viewBox="0 0 576 512" fill="#22c55e"><path d="M316.900 18C311.600 7 300.400 0 288.100 0s-23.400 7-28.800 18L195 150.300 51.400 171.500c-12 1.800-22 10.200-25.700 21.700s-.7 24.200 7.900 32.700L137.800 329 113.200 474.700c-2 12 3 24.200 12.900 31.300s23 8 33.800 2.300l128.300-68.500 128.300 68.500c10.800 5.700 23.900 4.900 33.800-2.300s14.900-19.300 12.900-31.300L438.500 329 542.700 225.900c8.600-8.500 11.700-21.200 7.900-32.700s-13.700-19.900-25.700-21.700L381.200 150.300 316.900 18z"/></svg>
<svg class="i" style="left:437.90px;top:17.70px;" width="13.50" height="12" viewBox="0 0 576 512" fill="#22c55e"><path d="M316.900 18C311.600 7 300.400 0 288.100 0s-23.400 7-28.800 18L195 150.300 51.400 171.500c-12 1.800-22 10.200-25.700 21.700s-.7 24.200 7.900 32.700L137.800 329 113.200 474.700c-2 12 3 24.200 12.900 31.300s23 8 33.800 2.300l128.300-68.500 128.300 68.500c10.800 5.700 23.900 4.900 33.800-2.300s14.900-19.300 12.900-31.300L438.500 329 542.700 225.900c8.600-8.500 11.700-21.200 7.900-32.700s-13.700-19.900-25.700-21.700L381.200 150.300 316.900 18z"/></svg>
<span class="t" style="top:15.00px;font-size:14px;line-height:18px;letter-spacing:1.140px;left:459.34px;">5/5</span>
<span class="t" style="top:15.00px;font-size:14px;line-height:18px;color:#9ca3af;left:530.58px;">-</span>
<span class="t" style="top:15.00px;font-size:14px;line-height:18px;color:#9ca3af;left:571.48px;">-</span>
<svg class="i" style="left:966.30px;top:16.60px;" width="14.40" height="14.4" viewBox="0 0 512 512" fill="#2563eb"><path d="M471.600 21.700c-21.900-21.900-57.300-21.900-79.200 0L362.300 51.700l97.900 97.900 30.100-30.100c21.900-21.900 21.900-57.300 0-79.200L471.600 21.700zm-299.200 220c-6.100 6.100-10.800 13.600-13.500 21.900l-29.600 88.800c-2.900 8.600-.6 18.100 5.800 24.600s15.900 8.700 24.600 5.800l88.800-29.600c8.200-2.700 15.700-7.400 21.900-13.500L437.700 172.300 339.700 74.300 172.400 241.700zM96 64C43 64 0 107 0 160V416c0 53 43 96 96 96H352c53 0 96-43 96-96V320c0-17.700-14.300-32-32-32s-32 14.300-32 32v96c0 17.700-14.300 32-32 32H96c-17.700 0-32-14.300-32-32V160c0-17.700 14.300-32 32-32h96c17.700 0 32-14.300 32-32s-14.300-32-32-32H96z"/></svg><svg class="i" style="left:988.70px;top:16.30px;" width="12.78" height="14.6" viewBox="0 0 448 512" fill="#dc2626"><path d="M135.200 17.700L128 32H32C14.300 32 0 46.300 0 64S14.300 96 32 96H416c17.700 0 32-14.300 32-32s-14.300-32-32-32H320l-7.200-14.300C307.400 6.800 296.300 0 284.200 0H163.800c-12.100 0-23.200 6.800-28.600 17.700zM416 128H32L53.200 467c1.600 25.300 22.600 45 47.900 45H346.900c25.300 0 46.300-19.700 47.900-45L416 128z"/></svg>
</div>
<div class="row" style="top:544px">
<span class="num" style="left:1px;top:12px"></span>
<span class="t" style="top:16.00px;font-size:11.8px;line-height:16px;font-weight:bold;color:#ff0a84;left:9.06px;">1</span>
<span class="t" style="top:15.00px;font-size:14.3px;line-height:18px;letter-spacing:-0.368px;left:32.98px;">Jack</span>
<span class="st present" style="left:117px;top:12px;width:59px"></span><span class="t md" style="top:15.00px;font-size:12.0px;line-height:16px;color:#bbf7d0;letter-spacing:0.522px;left:124.38px;">present</span>
<svg class="i" style="left:204.10px;top:17.70px;" width="13.50" height="12" viewBox="0 0 576 512" fill="#3b82f6"><path d="M316.900 18C311.600 7 300.400 0 288.100 0s-23.400 7-28.800 18L195 150.300 51.400 171.500c-12 1.800-22 10.200-25.700 21.700s-.7 24.200 7.900 32.700L137.800 329 113.200 474.700c-2 12 3 24.200 12.900 31.300s23 8 33.800 2.300l128.300-68.500 128.300 68.500c10.800 5.700 23.900 4.900 33.800-2.300s14.900-19.300 12.900-31.300L438.500 329 542.700 225.900c8.600-8.500 11.700-21.200 7.900-32.700s-13.700-19.900-25.700-21.700L381.200 150.300 316.900 18z"/></svg>
<svg class="i" style="left:221.60px;top:17.70px;" width="13.50" height="12" viewBox="0 0 576 512" fill="#3b82f6"><path d="M316.900 18C311.600 7 300.400 0 288.100 0s-23.400 7-28.800 18L195 150.300 51.400 171.500c-12 1.800-22 10.200-25.700 21.700s-.7 24.200 7.900 32.700L137.800 329 113.200 474.700c-2 12 3 24.200 12.900 31.300s23 8 33.800 2.300l128.300-68.500 128.300 68.500c10.800 5.700 23.900 4.900 33.800-2.300s14.900-19.300 12.900-31.300L438.500 329 542.700 225.900c8.600-8.500 11.700-21.200 7.900-32.700s-13.700-19.900-25.700-21.700L381.200 150.300 316.900 18z"/></svg>
<svg class="i" style="left:239.10px;top:17.70px;" width="13.50" height="12" viewBox="0 0 576 512" fill="#3b82f6"><path d="M316.900 18C311.600 7 300.400 0 288.100 0s-23.400 7-28.800 18L195 150.300 51.400 171.500c-12 1.800-22 10.200-25.700 21.700s-.7 24.200 7.900 32.700L137.800 329 113.200 474.700c-2 12 3 24.200 12.900 31.300s23 8 33.800 2.300l128.300-68.500 128.300 68.500c10.800 5.700 23.900 4.900 33.800-2.300s14.900-19.300 12.900-31.300L438.500 329 542.700 225.900c8.600-8.500 11.700-21.200 7.900-32.700s-13.700-19.900-25.700-21.700L381.200 150.300 316.900 18z"/></svg>
<svg class="i" style="left:256.60px;top:17.70px;" width="13.50" height="12" viewBox="0 0 576 512" fill="#d1d5db"><path d="M316.900 18C311.600 7 300.400 0 288.100 0s-23.400 7-28.800 18L195 150.300 51.400 171.500c-12 1.800-22 10.200-25.700 21.700s-.7 24.200 7.900 32.700L137.800 329 113.200 474.700c-2 12 3 24.200 12.900 31.300s23 8 33.800 2.300l128.300-68.500 128.300 68.500c10.800 5.700 23.900 4.900 33.800-2.300s14.900-19.300 12.900-31.300L438.500 329 542.700 225.900c8.600-8.500 11.700-21.200 7.900-32.700s-13.700-19.900-25.700-21.700L381.200 150.300 316.900 18z"/></svg>
<svg class="i" style="left:274.10px;top:17.70px;" width="13.50" height="12" viewBox="0 0 576 512" fill="#d1d5db"><path d="M316.900 18C311.600 7 300.400 0 288.100 0s-23.400 7-28.800 18L195 150.300 51.400 171.500c-12 1.800-22 10.200-25.700 21.700s-.7 24.200 7.900 32.700L137.800 329 113.200 474.700c-2 12 3 24.200 12.900 31.300s23 8 33.800 2.300l128.300-68.500 128.300 68.500c10.800 5.700 23.900 4.900 33.800-2.300s14.900-19.300 12.900-31.300L438.500 329 542.700 225.900c8.600-8.500 11.700-21.200 7.900-32.700s-13.700-19.900-25.700-21.700L381.200 150.300 316.900 18z"/></svg>
<span class="t" style="top:15.00px;font-size:14px;line-height:18px;letter-spacing:1.126px;left:295.27px;">3/5</span>
<svg class="i" style="left:367.90px;top:17.70px;" width="13.50" height="12" viewBox="0 0 576 512" fill="#22c55e"><path d="M316.900 18C311.600 7 300.400 0 288.100 0s-23.400 7-28.800 18L195 150.300 51.400 171.500c-12 1.800-22 10.200-25.700 21.700s-.7 24.200 7.900 32.700L137.800 329 113.200 474.700c-2 12 3 24.200 12.900 31.300s23 8 33.800 2.300l128.300-68.500 128.300 68.500c10.800 5.700 23.900 4.900 33.800-2.300s14.900-19.300 12.900-31.300L438.500 329 542.700 225.900c8.600-8.500 11.700-21.200 7.900-32.700s-13.700-19.900-25.700-21.700L381.200 150.300 316.900 18z"/></svg>
<svg class="i" style="left:385.40px;top:17.70px;" width="13.50" height="12" viewBox="0 0 576 512" fill="#22c55e"><path d="M316.900 18C311.600 7 300.400 0 288.100 0s-23.400 7-28.800 18L195 150.300 51.400 171.500c-12 1.800-22 10.200-25.700 21.700s-.7 24.200 7.900 32.700L137.800 329 113.200 474.700c-2 12 3 24.200 12.900 31.300s23 8 33.800 2.300l128.300-68.500 128.300 68.500c10.800 5.700 23.900 4.900 33.800-2.300s14.900-19.300 12.900-31.300L438.500 329 542.700 225.900c8.600-8.500 11.700-21.200 7.900-32.700s-13.700-19.900-25.700-21.700L381.200 150.300 316.900 18z"/></svg>
<svg class="i" style="left:402.90px;top:17.70px;" width="13.50" height="12" viewBox="0 0 576 512" fill="#22c55e"><path d="M316.900 18C311.600 7 300.400 0 288.100 0s-23.400 7-28.800 18L195 150.300 51.400 171.500c-12 1.800-22 10.200-25.700 21.700s-.7 24.200 7.900 32.700L137.800 329 113.200 474.700c-2 12 3 24.200 12.900 31.300s23 8 33.800 2.300l128.300-68.500 128.300 68.500c10.800 5.700 23.900 4.900 33.800-2.300s14.900-19.300 12.900-31.300L438.500 329 542.700 225.900c8.600-8.500 11.700-21.200 7.900-32.700s-13.700-19.900-25.700-21.700L381.200 150.300 316.900 18z"/></svg>
<svg class="i" style="left:420.40px;top:17.70px;" width="13.50" height="12" viewBox="0 0 576 512" fill="#d1d5db"><path d="M316.900 18C311.600 7 300.400 0 288.100 0s-23.400 7-28.800 18L195 150.300 51.400 171.500c-12 1.800-22 10.200-25.700 21.700s-.7 24.200 7.900 32.700L137.800 329 113.200 474.700c-2 12 3 24.200 12.900 31.300s23 8 33.800 2.300l128.300-68.500 128.300 68.500c10.800 5.700 23.900 4.900 33.800-2.300s14.900-19.300 12.900-31.300L438.500 329 542.700 225.900c8.600-8.500 11.700-21.200 7.900-32.700s-13.700-19.900-25.700-21.700L381.200 150.300 316.900 18z"/></svg>
<svg class="i" style="left:437.90px;top:17.70px;" width="13.50" height="12" viewBox="0 0 576 512" fill="#d1d5db"><path d="M316.900 18C311.600 7 300.400 0 288.100 0s-23.400 7-28.800 18L195 150.300 51.400 171.500c-12 1.800-22 10.200-25.700 21.700s-.7 24.200 7.900 32.700L137.800 329 113.200 474.700c-2 12 3 24.200 12.900 31.300s23 8 33.800 2.300l128.300-68.500 128.300 68.500c10.800 5.700 23.900 4.900 33.800-2.300s14.900-19.300 12.900-31.300L438.500 329 542.700 225.900c8.600-8.500 11.700-21.200 7.900-32.700s-13.700-19.900-25.700-21.700L381.200 150.300 316.900 18z"/></svg>
<span class="t" style="top:15.00px;font-size:14px;line-height:18px;letter-spacing:1.126px;left:459.37px;">3/5</span>
<span class="t" style="top:15.00px;font-size:14px;line-height:18px;color:#9ca3af;left:530.58px;">-</span>
<span class="t" style="top:15.00px;font-size:14px;line-height:18px;color:#9ca3af;left:571.48px;">-</span>
<svg class="i" style="left:966.30px;top:16.60px;" width="14.40" height="14.4" viewBox="0 0 512 512" fill="#2563eb"><path d="M471.600 21.700c-21.900-21.900-57.300-21.900-79.200 0L362.300 51.700l97.900 97.900 30.100-30.100c21.900-21.900 21.900-57.300 0-79.200L471.600 21.700zm-299.200 220c-6.100 6.100-10.800 13.600-13.500 21.900l-29.600 88.800c-2.900 8.600-.6 18.100 5.800 24.600s15.900 8.700 24.600 5.800l88.800-29.600c8.200-2.700 15.700-7.400 21.900-13.500L437.700 172.300 339.700 74.300 172.400 241.700zM96 64C43 64 0 107 0 160V416c0 53 43 96 96 96H352c53 0 96-43 96-96V320c0-17.700-14.300-32-32-32s-32 14.300-32 32v96c0 17.700-14.300 32-32 32H96c-17.700 0-32-14.300-32-32V160c0-17.700 14.300-32 32-32h96c17.700 0 32-14.300 32-32s-14.300-32-32-32H96z"/></svg><svg class="i" style="left:988.70px;top:16.30px;" width="12.78" height="14.6" viewBox="0 0 448 512" fill="#dc2626"><path d="M135.200 17.700L128 32H32C14.300 32 0 46.300 0 64S14.300 96 32 96H416c17.700 0 32-14.300 32-32s-14.300-32-32-32H320l-7.200-14.300C307.400 6.800 296.300 0 284.200 0H163.800c-12.100 0-23.200 6.800-28.600 17.700zM416 128H32L53.200 467c1.600 25.300 22.600 45 47.900 45H346.900c25.300 0 46.300-19.700 47.900-45L416 128z"/></svg>
</div>
<div class="row" style="top:593px">
<span class="num" style="left:1px;top:12px"></span>
<span class="t" style="top:16.00px;font-size:11.8px;line-height:16px;font-weight:bold;color:#ff0a84;left:9.53px;">3</span>
<span class="t" style="top:15.00px;font-size:14.3px;line-height:18px;letter-spacing:-0.002px;left:32.55px;">Stanley</span>
<span class="st absent" style="left:117px;top:12px;width:54px"></span><span class="t md" style="top:15.00px;font-size:12.0px;line-height:16px;color:#fecaca;letter-spacing:0.253px;left:124.64px;">absent</span>
<span class="t" style="top:15.00px;font-size:14px;line-height:18px;color:#9ca3af;left:203.78px;">-</span><span class="t" style="top:15.00px;font-size:14px;line-height:18px;color:#9ca3af;left:367.38px;">-</span>
<span class="t" style="top:15.00px;font-size:14px;line-height:18px;color:#9ca3af;left:530.58px;">-</span>
<span class="t" style="top:15.00px;font-size:14px;line-height:18px;color:#9ca3af;left:571.48px;">-</span>
<svg class="i" style="left:966.30px;top:16.60px;" width="14.40" height="14.4" viewBox="0 0 512 512" fill="#2563eb"><path d="M471.600 21.700c-21.900-21.900-57.300-21.900-79.200 0L362.300 51.700l97.900 97.900 30.100-30.100c21.900-21.900 21.900-57.300 0-79.200L471.600 21.700zm-299.200 220c-6.100 6.100-10.800 13.600-13.500 21.900l-29.600 88.800c-2.900 8.600-.6 18.100 5.800 24.600s15.900 8.700 24.600 5.800l88.800-29.600c8.200-2.700 15.700-7.400 21.900-13.500L437.700 172.300 339.700 74.300 172.400 241.700zM96 64C43 64 0 107 0 160V416c0 53 43 96 96 96H352c53 0 96-43 96-96V320c0-17.700-14.300-32-32-32s-32 14.300-32 32v96c0 17.700-14.300 32-32 32H96c-17.700 0-32-14.300-32-32V160c0-17.700 14.300-32 32-32h96c17.700 0 32-14.300 32-32s-14.300-32-32-32H96z"/></svg><svg class="i" style="left:988.70px;top:16.30px;" width="12.78" height="14.6" viewBox="0 0 448 512" fill="#dc2626"><path d="M135.200 17.700L128 32H32C14.300 32 0 46.300 0 64S14.300 96 32 96H416c17.700 0 32-14.300 32-32s-14.300-32-32-32H320l-7.200-14.300C307.400 6.800 296.300 0 284.200 0H163.800c-12.100 0-23.200 6.800-28.600 17.700zM416 128H32L53.200 467c1.600 25.300 22.600 45 47.900 45H346.900c25.300 0 46.300-19.700 47.900-45L416 128z"/></svg>
</div>
<div class="row" style="top:642px">
<span class="num" style="left:1px;top:12px"></span>
<span class="t" style="top:16.00px;font-size:11.8px;line-height:16px;font-weight:bold;color:#ff0a84;left:9.44px;">5</span>
<span class="t" style="top:15.00px;font-size:14.3px;line-height:18px;letter-spacing:-0.156px;left:32.47px;">Charlie</span>
<span class="st present" style="left:117px;top:12px;width:59px"></span><span class="t md" style="top:15.00px;font-size:12.0px;line-height:16px;color:#bbf7d0;letter-spacing:0.522px;left:124.38px;">present</span>
<svg class="i" style="left:204.10px;top:17.70px;" width="13.50" height="12" viewBox="0 0 576 512" fill="#3b82f6"><path d="M316.900 18C311.600 7 300.400 0 288.100 0s-23.400 7-28.800 18L195 150.300 51.400 171.500c-12 1.800-22 10.200-25.700 21.700s-.7 24.200 7.900 32.700L137.800 329 113.200 474.700c-2 12 3 24.200 12.900 31.300s23 8 33.800 2.300l128.300-68.500 128.300 68.500c10.800 5.700 23.900 4.900 33.800-2.300s14.900-19.300 12.900-31.300L438.500 329 542.700 225.900c8.600-8.500 11.700-21.200 7.900-32.700s-13.700-19.900-25.700-21.700L381.200 150.300 316.900 18z"/></svg>
<svg class="i" style="left:221.60px;top:17.70px;" width="13.50" height="12" viewBox="0 0 576 512" fill="#3b82f6"><path d="M316.900 18C311.600 7 300.400 0 288.100 0s-23.400 7-28.800 18L195 150.300 51.400 171.500c-12 1.800-22 10.200-25.700 21.700s-.7 24.200 7.900 32.700L137.800 329 113.200 474.700c-2 12 3 24.200 12.900 31.300s23 8 33.800 2.300l128.300-68.500 128.300 68.500c10.800 5.700 23.900 4.900 33.800-2.300s14.900-19.300 12.900-31.300L438.500 329 542.700 225.900c8.600-8.500 11.700-21.200 7.900-32.700s-13.700-19.900-25.700-21.700L381.200 150.300 316.900 18z"/></svg>
<svg class="i" style="left:239.10px;top:17.70px;" width="13.50" height="12" viewBox="0 0 576 512" fill="#3b82f6"><path d="M316.900 18C311.600 7 300.400 0 288.100 0s-23.400 7-28.800 18L195 150.300 51.400 171.500c-12 1.800-22 10.200-25.700 21.700s-.7 24.200 7.900 32.700L137.800 329 113.200 474.700c-2 12 3 24.200 12.900 31.300s23 8 33.800 2.300l128.300-68.500 128.300 68.500c10.800 5.700 23.900 4.900 33.800-2.300s14.900-19.300 12.900-31.300L438.500 329 542.700 225.900c8.600-8.500 11.700-21.200 7.900-32.700s-13.700-19.900-25.700-21.700L381.200 150.300 316.900 18z"/></svg>
<svg class="i" style="left:256.60px;top:17.70px;" width="13.50" height="12" viewBox="0 0 576 512" fill="#d1d5db"><path d="M316.900 18C311.600 7 300.400 0 288.100 0s-23.400 7-28.800 18L195 150.300 51.400 171.500c-12 1.800-22 10.200-25.700 21.700s-.7 24.200 7.900 32.700L137.800 329 113.200 474.700c-2 12 3 24.200 12.900 31.300s23 8 33.800 2.300l128.300-68.500 128.300 68.500c10.800 5.700 23.900 4.900 33.800-2.300s14.900-19.300 12.900-31.300L438.500 329 542.700 225.900c8.600-8.500 11.700-21.200 7.900-32.700s-13.700-19.900-25.700-21.700L381.200 150.300 316.900 18z"/></svg>
<svg class="i" style="left:274.10px;top:17.70px;" width="13.50" height="12" viewBox="0 0 576 512" fill="#d1d5db"><path d="M316.900 18C311.600 7 300.400 0 288.100 0s-23.400 7-28.800 18L195 150.300 51.400 171.500c-12 1.800-22 10.200-25.700 21.700s-.7 24.200 7.900 32.700L137.800 329 113.200 474.700c-2 12 3 24.200 12.900 31.300s23 8 33.800 2.300l128.300-68.500 128.300 68.500c10.800 5.700 23.900 4.900 33.800-2.300s14.900-19.300 12.900-31.300L438.500 329 542.700 225.900c8.600-8.500 11.700-21.200 7.900-32.700s-13.700-19.900-25.700-21.700L381.200 150.300 316.900 18z"/></svg>
<span class="t" style="top:15.00px;font-size:14px;line-height:18px;letter-spacing:1.126px;left:295.27px;">3/5</span>
<svg class="i" style="left:367.90px;top:17.70px;" width="13.50" height="12" viewBox="0 0 576 512" fill="#22c55e"><path d="M316.900 18C311.600 7 300.400 0 288.100 0s-23.400 7-28.800 18L195 150.300 51.400 171.500c-12 1.800-22 10.200-25.700 21.700s-.7 24.200 7.900 32.700L137.800 329 113.200 474.700c-2 12 3 24.200 12.900 31.300s23 8 33.800 2.300l128.300-68.500 128.300 68.500c10.800 5.700 23.900 4.900 33.800-2.300s14.900-19.300 12.900-31.300L438.500 329 542.700 225.900c8.600-8.500 11.700-21.200 7.900-32.700s-13.700-19.900-25.700-21.700L381.200 150.300 316.900 18z"/></svg>
<svg class="i" style="left:385.40px;top:17.70px;" width="13.50" height="12" viewBox="0 0 576 512" fill="#22c55e"><path d="M316.900 18C311.600 7 300.400 0 288.100 0s-23.400 7-28.800 18L195 150.300 51.400 171.500c-12 1.800-22 10.200-25.700 21.700s-.7 24.200 7.900 32.700L137.800 329 113.200 474.700c-2 12 3 24.200 12.900 31.300s23 8 33.800 2.300l128.300-68.500 128.300 68.500c10.800 5.700 23.900 4.900 33.800-2.300s14.900-19.300 12.900-31.300L438.500 329 542.700 225.900c8.600-8.500 11.700-21.200 7.900-32.700s-13.700-19.900-25.700-21.700L381.200 150.300 316.900 18z"/></svg>
<svg class="i" style="left:402.90px;top:17.70px;" width="13.50" height="12" viewBox="0 0 576 512" fill="#22c55e"><path d="M316.900 18C311.600 7 300.400 0 288.100 0s-23.400 7-28.800 18L195 150.300 51.400 171.500c-12 1.800-22 10.200-25.700 21.700s-.7 24.200 7.900 32.700L137.800 329 113.200 474.700c-2 12 3 24.200 12.900 31.300s23 8 33.800 2.300l128.300-68.500 128.300 68.500c10.800 5.700 23.900 4.900 33.800-2.300s14.900-19.300 12.900-31.300L438.500 329 542.700 225.900c8.600-8.500 11.700-21.200 7.900-32.700s-13.700-19.900-25.700-21.700L381.200 150.300 316.900 18z"/></svg>
<svg class="i" style="left:420.40px;top:17.70px;" width="13.50" height="12" viewBox="0 0 576 512" fill="#d1d5db"><path d="M316.900 18C311.600 7 300.400 0 288.100 0s-23.400 7-28.800 18L195 150.300 51.400 171.500c-12 1.800-22 10.200-25.700 21.700s-.7 24.200 7.900 32.700L137.800 329 113.200 474.700c-2 12 3 24.200 12.900 31.300s23 8 33.800 2.300l128.300-68.500 128.300 68.500c10.800 5.700 23.900 4.900 33.800-2.300s14.900-19.300 12.900-31.300L438.500 329 542.700 225.900c8.600-8.500 11.700-21.200 7.900-32.700s-13.700-19.900-25.700-21.700L381.200 150.300 316.900 18z"/></svg>
<svg class="i" style="left:437.90px;top:17.70px;" width="13.50" height="12" viewBox="0 0 576 512" fill="#d1d5db"><path d="M316.900 18C311.600 7 300.400 0 288.100 0s-23.400 7-28.800 18L195 150.300 51.400 171.500c-12 1.800-22 10.200-25.700 21.700s-.7 24.200 7.900 32.700L137.800 329 113.200 474.700c-2 12 3 24.200 12.900 31.300s23 8 33.800 2.300l128.300-68.500 128.300 68.500c10.800 5.700 23.900 4.900 33.800-2.300s14.900-19.300 12.900-31.300L438.500 329 542.700 225.900c8.600-8.500 11.700-21.200 7.900-32.700s-13.700-19.900-25.700-21.700L381.200 150.300 316.900 18z"/></svg>
<span class="t" style="top:15.00px;font-size:14px;line-height:18px;letter-spacing:1.126px;left:459.37px;">3/5</span>
<span class="t" style="top:15.00px;font-size:14px;line-height:18px;color:#9ca3af;left:530.58px;">-</span>
<span class="t" style="top:15.00px;font-size:14px;line-height:18px;color:#9ca3af;left:571.48px;">-</span>
<svg class="i" style="left:966.30px;top:16.60px;" width="14.40" height="14.4" viewBox="0 0 512 512" fill="#2563eb"><path d="M471.600 21.700c-21.900-21.900-57.300-21.900-79.200 0L362.300 51.700l97.900 97.900 30.100-30.100c21.900-21.900 21.900-57.300 0-79.200L471.600 21.700zm-299.200 220c-6.100 6.100-10.800 13.600-13.500 21.900l-29.600 88.800c-2.900 8.600-.6 18.100 5.800 24.600s15.900 8.700 24.600 5.800l88.800-29.600c8.200-2.700 15.700-7.400 21.900-13.500L437.700 172.300 339.700 74.300 172.400 241.700zM96 64C43 64 0 107 0 160V416c0 53 43 96 96 96H352c53 0 96-43 96-96V320c0-17.700-14.300-32-32-32s-32 14.300-32 32v96c0 17.700-14.300 32-32 32H96c-17.700 0-32-14.300-32-32V160c0-17.700 14.300-32 32-32h96c17.700 0 32-14.300 32-32s-14.300-32-32-32H96z"/></svg><svg class="i" style="left:988.70px;top:16.30px;" width="12.78" height="14.6" viewBox="0 0 448 512" fill="#dc2626"><path d="M135.200 17.700L128 32H32C14.300 32 0 46.300 0 64S14.300 96 32 96H416c17.700 0 32-14.300 32-32s-14.300-32-32-32H320l-7.200-14.300C307.400 6.800 296.300 0 284.200 0H163.800c-12.100 0-23.200 6.800-28.600 17.700zM416 128H32L53.200 467c1.600 25.300 22.600 45 47.900 45H346.900c25.300 0 46.300-19.700 47.900-45L416 128z"/></svg>
</div>
</section></main>
<div class="dev">
<svg class="i" style="left:7.00px;top:8.00px;" width="21" height="15" viewBox="833 1221 21 15"><g fill="none" stroke="#a3a3a3" stroke-width="1.500" stroke-linejoin="round"><path d="M844.500 1233.400H835L841 1222.800L844 1228"/><path d="M841.800 1233.400L846.800 1225.600L851.400 1233.400z"/></g></svg>
<i class="sep" style="left:34px"></i><i class="sep" style="left:76px"></i>
<span class="t" style="top:8.00px;font-size:11.6px;line-height:14px;color:#e0e0e0;left:44.76px;">3</span><span class="t" style="top:8.00px;font-size:9px;line-height:12px;color:#9a9a9a;letter-spacing:0.923px;left:54.40px;">ms</span>
<svg class="i" style="left:86.00px;top:7.00px;" width="16" height="16" viewBox="912 1220 16 16"><g fill="none" stroke="#a3a3a3" stroke-width="1.400"><circle cx="920" cy="1228" r="5.300"/><path d="M920 1220.500v2.600M920 1232.900v2.600M912.500 1228h2.600M924.900 1228h2.600"/></g><rect x="919.100" y="1227.100" width="1.800" height="1.800" fill="#a3a3a3"/></svg>
</div>
</body></html>
